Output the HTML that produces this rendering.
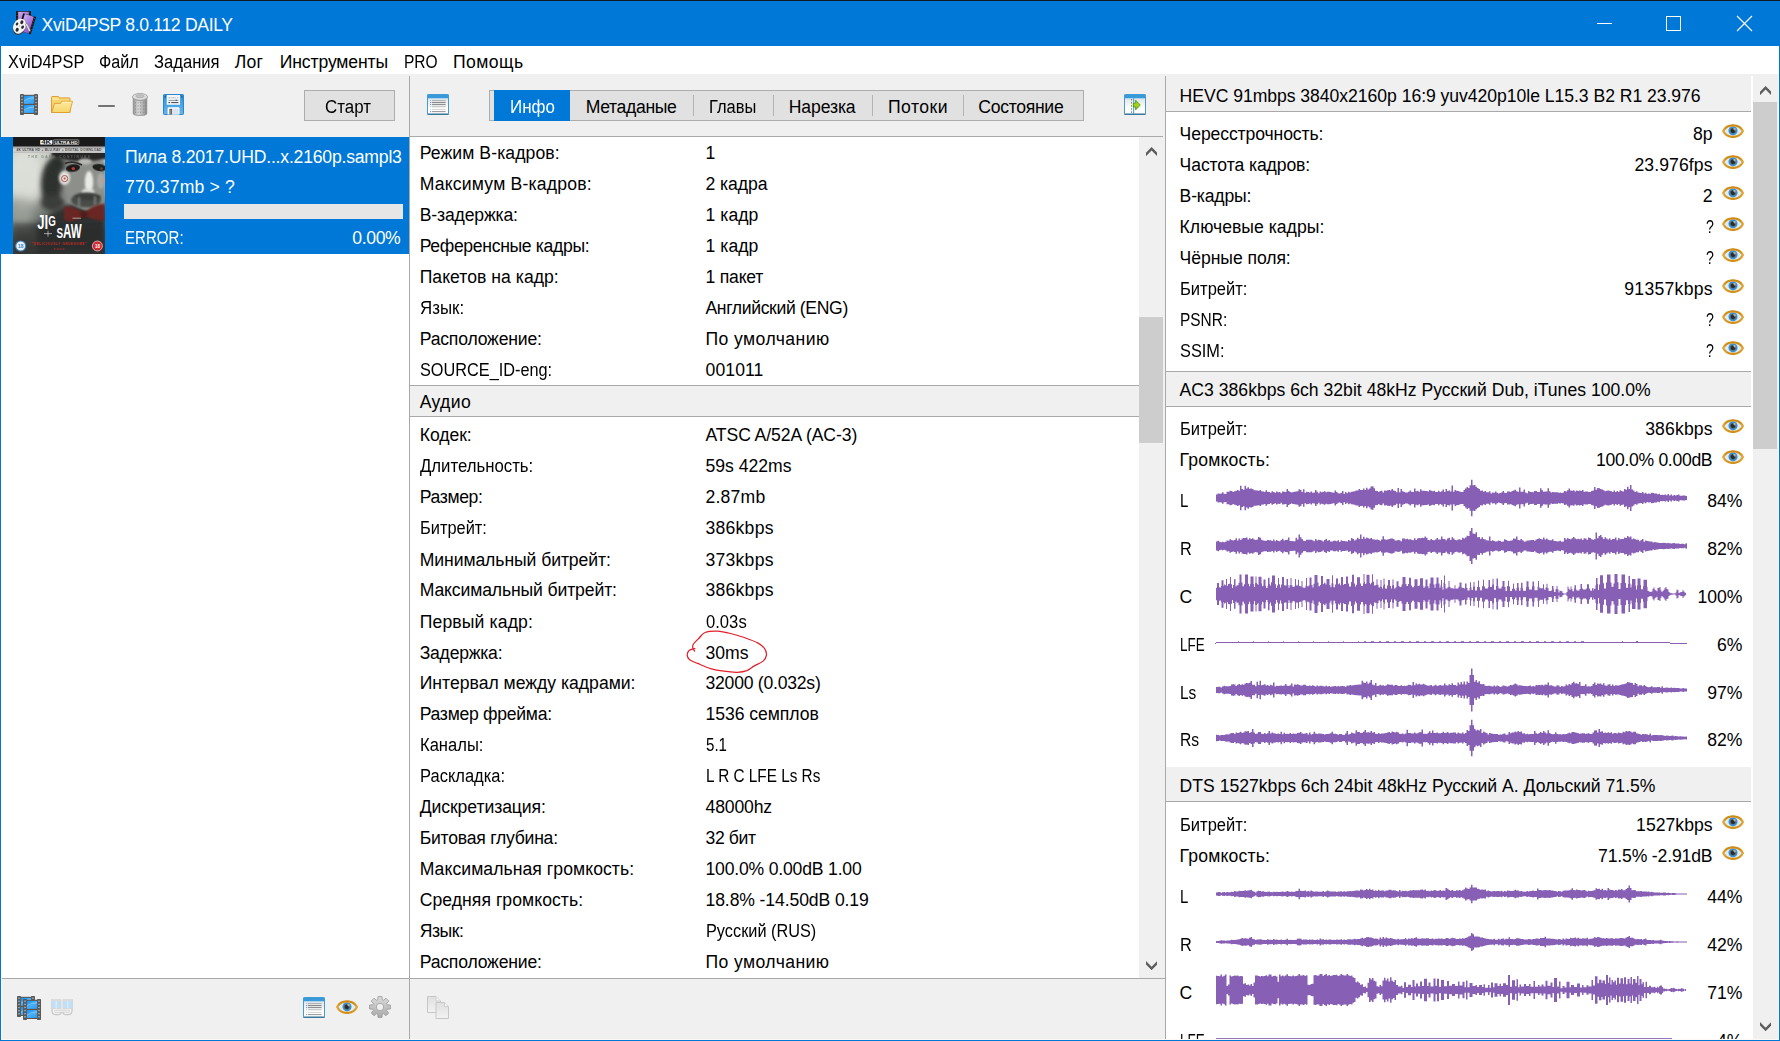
<!DOCTYPE html>
<html lang="ru"><head><meta charset="utf-8"><title>XviD4PSP 8.0.112 DAILY</title>
<style>
html,body{margin:0;padding:0;background:#fff;}
body{width:1780px;height:1041px;overflow:hidden;font-family:"Liberation Sans",sans-serif;}
#win{position:relative;width:1780px;height:1041px;overflow:hidden;background:#fff;}
#win>div,#win>svg,#win>span{position:absolute;}
.t{white-space:pre;transform-origin:0 50%;font-size:17.6px;line-height:20px;color:#000;}
</style></head>
<body>
<div id="win">
<div style="left:0px;top:0px;width:1780px;height:1041px;background:#0078d7;"></div>
<div style="left:0px;top:0px;width:1780px;height:1px;background:#101a24;"></div>
<div style="left:1px;top:46px;width:1778px;height:994px;background:#fbf8f5;"></div>
<div style="left:1px;top:46px;width:1778px;height:28px;background:#fff;"></div>
<div style="left:2px;top:74px;width:1776px;height:965px;background:#f0f0f0;"></div>
<div style="left:1px;top:137px;width:408px;height:841px;background:#fff;"></div>
<div style="left:2px;top:978px;width:407px;height:1px;background:#a9a9a9;"></div>
<div style="left:409px;top:76px;width:1px;height:963px;background:#a9a9a9;"></div>
<div style="left:1px;top:137px;width:408px;height:117px;background:#0078d7;"></div>
<div style="left:304px;top:90px;width:91px;height:31px;background:#e1e1e1;box-sizing:border-box;border:1px solid #adadad;"></div>
<div style="left:410px;top:136px;width:753px;height:1px;background:#a9a9a9;"></div>
<div style="left:410px;top:137px;width:729px;height:841px;background:#fff;"></div>
<div style="left:410px;top:978px;width:755px;height:1px;background:#a9a9a9;"></div>
<div style="left:1139px;top:137px;width:26px;height:841px;background:#f0f0f0;"></div>
<div style="left:1139px;top:317px;width:24px;height:126px;background:#cdcdcd;"></div>
<div style="left:1165px;top:76px;width:1px;height:963px;background:#a9a9a9;"></div>
<div style="left:1166px;top:74px;width:585px;height:965px;background:#fff;"></div>
<div style="left:1751px;top:76px;width:2px;height:963px;background:#fff;"></div>
<div style="left:1753px;top:74px;width:25px;height:965px;background:#f0f0f0;"></div>
<div style="left:1753px;top:102px;width:24px;height:347px;background:#cdcdcd;"></div>
<div style="left:489px;top:90px;width:595px;height:31px;background:#e1e1e1;box-sizing:border-box;border:1px solid #adadad;"></div>
<div style="left:494px;top:90px;width:76px;height:31px;background:#0078d7;"></div>
<div style="left:693px;top:95px;width:1px;height:21px;background:#b4b4b4;"></div>
<div style="left:773px;top:95px;width:1px;height:21px;background:#b4b4b4;"></div>
<div style="left:872px;top:95px;width:1px;height:21px;background:#b4b4b4;"></div>
<div style="left:963px;top:95px;width:1px;height:21px;background:#b4b4b4;"></div>
<div style="left:410px;top:385px;width:729px;height:1px;background:#a9a9a9;"></div>
<div style="left:410px;top:386px;width:729px;height:30px;background:#f0f0f0;"></div>
<div style="left:410px;top:416px;width:729px;height:1px;background:#a9a9a9;"></div>
<div style="left:1166px;top:74px;width:585px;height:2px;background:#f0f0f0;"></div>
<div style="left:1166px;top:76px;width:585px;height:35px;background:#f0f0f0;"></div>
<div style="left:1166px;top:111px;width:585px;height:1px;background:#a9a9a9;"></div>
<div style="left:1166px;top:371px;width:585px;height:1px;background:#a9a9a9;"></div>
<div style="left:1166px;top:372px;width:585px;height:34px;background:#f0f0f0;"></div>
<div style="left:1166px;top:406px;width:585px;height:1px;background:#a9a9a9;"></div>
<div style="left:1166px;top:767px;width:585px;height:34px;background:#f0f0f0;"></div>
<div style="left:1166px;top:801px;width:585px;height:1px;background:#a9a9a9;"></div>
<div style="left:1215.5px;top:642px;width:454px;height:1px;background:#875fb4;"></div>
<div style="left:1669.5px;top:643px;width:17px;height:1px;background:#875fb4;"></div>
<div style="left:1215px;top:642.5px;width:1px;height:1px;background:#875fb4;"></div>
<div style="left:1237.5px;top:641px;width:1px;height:1px;background:#875fb4;opacity:.75;"></div>
<div style="left:1252.5px;top:641px;width:1px;height:1px;background:#875fb4;opacity:.75;"></div>
<div style="left:1267.5px;top:641px;width:1px;height:1px;background:#875fb4;opacity:.75;"></div>
<div style="left:1282.5px;top:641px;width:1px;height:1px;background:#875fb4;opacity:.75;"></div>
<div style="left:1297.5px;top:641px;width:1px;height:1px;background:#875fb4;opacity:.75;"></div>
<div style="left:1312.5px;top:641px;width:1px;height:1px;background:#875fb4;opacity:.75;"></div>
<div style="left:1327.5px;top:641px;width:1px;height:1px;background:#875fb4;opacity:.75;"></div>
<div style="left:1342.5px;top:641px;width:1px;height:1px;background:#875fb4;opacity:.75;"></div>
<div style="left:1357.5px;top:641px;width:1px;height:1px;background:#875fb4;opacity:.75;"></div>
<div style="left:1363.5px;top:641px;width:2.5px;height:1px;background:#875fb4;opacity:.8;"></div>
<div style="left:1371px;top:641px;width:2.5px;height:1px;background:#875fb4;opacity:.8;"></div>
<div style="left:1378.5px;top:641px;width:2.5px;height:1px;background:#875fb4;opacity:.8;"></div>
<div style="left:1386px;top:641px;width:2.5px;height:1px;background:#875fb4;opacity:.8;"></div>
<div style="left:1393.5px;top:641px;width:2.5px;height:1px;background:#875fb4;opacity:.8;"></div>
<div style="left:1401px;top:641px;width:2.5px;height:1px;background:#875fb4;opacity:.8;"></div>
<div style="left:1408.5px;top:641px;width:2.5px;height:1px;background:#875fb4;opacity:.8;"></div>
<div style="left:1416px;top:641px;width:2.5px;height:1px;background:#875fb4;opacity:.8;"></div>
<div style="left:1423.5px;top:641px;width:2.5px;height:1px;background:#875fb4;opacity:.8;"></div>
<div style="left:1431px;top:641px;width:2.5px;height:1px;background:#875fb4;opacity:.8;"></div>
<div style="left:1438.5px;top:641px;width:2.5px;height:1px;background:#875fb4;opacity:.8;"></div>
<div style="left:1446px;top:641px;width:2.5px;height:1px;background:#875fb4;opacity:.8;"></div>
<div style="left:1453.5px;top:641px;width:2.5px;height:1px;background:#875fb4;opacity:.8;"></div>
<div style="left:1461px;top:641px;width:2.5px;height:1px;background:#875fb4;opacity:.8;"></div>
<div style="left:1468.5px;top:641px;width:2.5px;height:1px;background:#875fb4;opacity:.8;"></div>
<div style="left:1476px;top:641px;width:2.5px;height:1px;background:#875fb4;opacity:.8;"></div>
<div style="left:1483.5px;top:641px;width:2.5px;height:1px;background:#875fb4;opacity:.8;"></div>
<div style="left:1491px;top:641px;width:2.5px;height:1px;background:#875fb4;opacity:.8;"></div>
<div style="left:1498.5px;top:641px;width:2.5px;height:1px;background:#875fb4;opacity:.8;"></div>
<div style="left:1506px;top:641px;width:2.5px;height:1px;background:#875fb4;opacity:.8;"></div>
<div style="left:1513.5px;top:641px;width:2.5px;height:1px;background:#875fb4;opacity:.8;"></div>
<div style="left:1521px;top:641px;width:2.5px;height:1px;background:#875fb4;opacity:.8;"></div>
<div style="left:1528.5px;top:641px;width:2.5px;height:1px;background:#875fb4;opacity:.8;"></div>
<div style="left:1536px;top:641px;width:2.5px;height:1px;background:#875fb4;opacity:.8;"></div>
<div style="left:1543.5px;top:641px;width:2.5px;height:1px;background:#875fb4;opacity:.8;"></div>
<div style="left:1551px;top:641px;width:2.5px;height:1px;background:#875fb4;opacity:.8;"></div>
<div style="left:1558.5px;top:641px;width:2.5px;height:1px;background:#875fb4;opacity:.8;"></div>
<div style="left:1566px;top:641px;width:2.5px;height:1px;background:#875fb4;opacity:.8;"></div>
<div style="left:1573.5px;top:641px;width:2.5px;height:1px;background:#875fb4;opacity:.8;"></div>
<div style="left:1581px;top:641px;width:2.5px;height:1px;background:#875fb4;opacity:.8;"></div>
<div style="left:1621.5px;top:641px;width:1px;height:1px;background:#875fb4;"></div>
<div style="left:1635.5px;top:641px;width:2px;height:1px;background:#875fb4;"></div>
<div style="left:1215.5px;top:1038px;width:456px;height:1px;background:#875fb4;opacity:.85;"></div>
<div style="left:97.5px;top:104.5px;width:17.5px;height:2.3px;background:#737373;border-radius:1px;"></div>
<div style="left:124px;top:204px;width:279px;height:15px;background:#e6e6e6;"></div>
<svg style="left:1590px;top:8px" width="180" height="32" viewBox="0 0 180 32"><g stroke="#fff" stroke-width="1" fill="none" shape-rendering="crispEdges"><path d="M7 15.5H22"/><rect x="76.5" y="8.5" width="14" height="14"/></g><path d="M147 8L162 23M162 8L147 23" stroke="#fff" stroke-width="1.1" fill="none"/></svg>
<svg width="0" height="0" style="left:0;top:0"><defs>
<linearGradient id="lid" x1="0" y1="0" x2="0" y2="1"><stop offset="0" stop-color="#cf8a12"/><stop offset=".5" stop-color="#e8a531"/><stop offset="1" stop-color="#d38f17"/></linearGradient>
<radialGradient id="iris" cx=".5" cy=".5" r=".5"><stop offset="0" stop-color="#2f6fa8"/><stop offset=".6" stop-color="#3b86c6"/><stop offset="1" stop-color="#4a97d8"/></radialGradient>
<symbol id="eye" viewBox="0 0 22 14">
<path d="M.8 7.1C4.6-.6 17.4-.6 21.3 7.1 17.4 14.9 4.6 14.9.8 7.1Z" fill="#dbeffb"/>
<circle cx="11" cy="6.8" r="4.6" fill="url(#iris)"/>
<circle cx="11" cy="6.8" r="2.7" fill="#2b2b2b" stroke="#86a88f" stroke-width=".35"/>
<path d="M11.3 4.3h2.2v2.3h-1.1v-1.2h-1.1z" fill="#c9c9c9"/>
<path d="M1.2 7.1C5-.6 17-.6 20.9 7.1 17 14.9 5 14.9 1.2 7.1Z" fill="none" stroke="url(#lid)" stroke-width="2.2" stroke-linejoin="round"/>
<path d="M3 4.6C7 .2 15 .2 19 4.6" fill="none" stroke="#cf8d16" stroke-width="1.1"/>
</symbol></defs></svg>
<span class="t" style="right:67.4px;top:124px">8p</span>
<svg style="left:1721.8px;top:124px" width="22" height="14"><use href="#eye"/></svg>
<svg style="left:1721.8px;top:155px" width="22" height="14"><use href="#eye"/></svg>
<span class="t" style="right:67.4px;top:186px">2</span>
<svg style="left:1721.8px;top:186px" width="22" height="14"><use href="#eye"/></svg>
<svg style="left:1721.8px;top:217px" width="22" height="14"><use href="#eye"/></svg>
<svg style="left:1721.8px;top:248px" width="22" height="14"><use href="#eye"/></svg>
<svg style="left:1721.8px;top:279px" width="22" height="14"><use href="#eye"/></svg>
<svg style="left:1721.8px;top:310px" width="22" height="14"><use href="#eye"/></svg>
<svg style="left:1721.8px;top:341px" width="22" height="14"><use href="#eye"/></svg>
<svg style="left:1721.8px;top:419px" width="22" height="14"><use href="#eye"/></svg>
<svg style="left:1721.8px;top:450px" width="22" height="14"><use href="#eye"/></svg>
<span class="t" style="right:37.6px;top:491px">84%</span>
<span class="t" style="right:37.6px;top:539px">82%</span>
<span class="t" style="right:37.6px;top:587px">100%</span>
<span class="t" style="right:37.6px;top:635px">6%</span>
<span class="t" style="right:37.6px;top:683px">97%</span>
<span class="t" style="right:37.6px;top:730px">82%</span>
<svg style="left:1721.8px;top:815px" width="22" height="14"><use href="#eye"/></svg>
<svg style="left:1721.8px;top:846px" width="22" height="14"><use href="#eye"/></svg>
<span class="t" style="right:37.6px;top:887px">44%</span>
<span class="t" style="right:37.6px;top:935px">42%</span>
<span class="t" style="right:37.6px;top:983px">71%</span>
<span class="t" style="right:37.6px;top:1031px">4%</span>
<svg style="left:1215.5px;top:474.4px" width="474" height="48" viewBox="0 -24 474 48"><path fill="#875fb4" d="M0 -3.5V-3.5h1.5V-4.5h1.5V-4.2h1.5V-4.5h1.5V-5.8h1.5V-4.3h1.5V-3.9h1.5V-6.2h1.5V-6.2h1.5V-7.2h1.5V-7.1h1.5V-6.0h1.5V-6.8h1.5V-7.3h1.5V-8.1h1.5V-7.3h1.5V-12.2h1.5V-9.0h1.5V-8.2h1.5V-12.3h1.5V-9.4h1.5V-10.8h1.5V-9.3h1.5V-9.6h1.5V-8.9h1.5V-7.8h1.5V-7.7h1.5V-7.4h1.5V-7.2h1.5V-8.1h1.5V-6.7h1.5V-6.5h1.5V-6.0h1.5V-7.7h1.5V-6.3h1.5V-6.0h1.5V-5.2h1.5V-6.8h1.5V-5.9h1.5V-5.2h1.5V-6.6h1.5V-5.7h1.5V-5.9h1.5V-4.8h1.5V-6.4h1.5V-6.3h1.5V-5.9h1.5V-8.9h1.5V-6.9h1.5V-5.9h1.5V-5.6h1.5V-6.0h1.5V-6.2h1.5V-6.5h1.5V-6.7h1.5V-8.8h1.5V-8.0h1.5V-6.1h1.5V-8.8h1.5V-5.2h1.5V-6.3h1.5V-6.0h1.5V-5.6h1.5V-6.6h1.5V-5.2h1.5V-5.5h1.5V-7.9h1.5V-6.2h1.5V-4.8h1.5V-6.4h1.5V-5.7h1.5V-6.2h1.5V-6.7h1.5V-5.8h1.5V-6.3h1.5V-6.2h1.5V-6.1h1.5V-5.5h1.5V-5.3h1.5V-7.4h1.5V-5.9h1.5V-4.7h1.5V-4.6h1.5V-5.3h1.5V-7.1h1.5V-4.3h1.5V-6.0h1.5V-4.8h1.5V-6.3h1.5V-5.6h1.5V-6.3h1.5V-6.5h1.5V-6.8h1.5V-7.4h1.5V-7.5h1.5V-8.9h1.5V-7.9h1.5V-8.0h1.5V-9.5h1.5V-8.1h1.5V-10.2h1.5V-8.5h1.5V-9.4h1.5V-11.6h1.5V-11.8h1.5V-9.7h1.5V-7.3h1.5V-7.0h1.5V-6.0h1.5V-7.1h1.5V-7.3h1.5V-5.6h1.5V-7.4h1.5V-7.3h1.5V-7.8h1.5V-8.1h1.5V-7.4h1.5V-9.0h1.5V-7.5h1.5V-7.1h1.5V-5.7h1.5V-10.0h1.5V-5.8h1.5V-8.9h1.5V-6.8h1.5V-6.0h1.5V-5.6h1.5V-5.4h1.5V-6.2h1.5V-7.5h1.5V-6.2h1.5V-5.9h1.5V-9.4h1.5V-6.7h1.5V-7.2h1.5V-6.3h1.5V-8.7h1.5V-7.3h1.5V-7.3h1.5V-6.9h1.5V-6.9h1.5V-6.4h1.5V-8.0h1.5V-7.3h1.5V-6.7h1.5V-7.3h1.5V-6.0h1.5V-6.0h1.5V-7.3h1.5V-6.1h1.5V-6.7h1.5V-8.4h1.5V-5.9h1.5V-9.1h1.5V-6.9h1.5V-7.5h1.5V-6.5h1.5V-12.6h1.5V-6.3h1.5V-8.1h1.5V-7.3h1.5V-6.9h1.5V-6.4h1.5V-6.1h1.5V-5.9h1.5V-8.0h1.5V-9.4h1.5V-11.0h1.5V-10.1h1.5V-12.8h1.5V-18.3h1.5V-12.8h1.5V-13.0h1.5V-11.2h1.5V-10.1h1.5V-8.9h1.5V-7.2h1.5V-7.6h1.5V-6.2h1.5V-6.9h1.5V-5.8h1.5V-5.7h1.5V-6.8h1.5V-4.6h1.5V-5.5h1.5V-5.3h1.5V-6.5h1.5V-5.2h1.5V-4.6h1.5V-5.1h1.5V-5.6h1.5V-7.1h1.5V-5.3h1.5V-4.9h1.5V-6.5h1.5V-6.4h1.5V-5.9h1.5V-6.9h1.5V-7.6h1.5V-8.3h1.5V-6.7h1.5V-6.3h1.5V-10.4h1.5V-6.2h1.5V-6.3h1.5V-8.6h1.5V-5.5h1.5V-4.7h1.5V-7.0h1.5V-6.0h1.5V-5.9h1.5V-5.7h1.5V-6.9h1.5V-6.9h1.5V-5.9h1.5V-6.1h1.5V-9.7h1.5V-7.7h1.5V-6.3h1.5V-6.5h1.5V-6.6h1.5V-9.7h1.5V-6.7h1.5V-5.5h1.5V-5.9h1.5V-5.7h1.5V-5.7h1.5V-5.8h1.5V-5.2h1.5V-5.6h1.5V-5.1h1.5V-5.4h1.5V-7.1h1.5V-6.6h1.5V-7.7h1.5V-9.5h1.5V-7.4h1.5V-7.3h1.5V-7.7h1.5V-6.5h1.5V-7.4h1.5V-7.0h1.5V-7.4h1.5V-7.0h1.5V-7.9h1.5V-6.3h1.5V-6.5h1.5V-6.6h1.5V-6.1h1.5V-6.1h1.5V-7.0h1.5V-7.6h1.5V-10.9h1.5V-8.3h1.5V-10.0h1.5V-9.7h1.5V-9.1h1.5V-8.6h1.5V-7.7h1.5V-6.8h1.5V-7.2h1.5V-7.4h1.5V-7.2h1.5V-6.7h1.5V-6.0h1.5V-7.5h1.5V-6.0h1.5V-6.9h1.5V-5.9h1.5V-7.8h1.5V-7.1h1.5V-6.5h1.5V-9.1h1.5V-8.2h1.5V-11.3h1.5V-9.0h1.5V-13.1h1.5V-8.4h1.5V-7.6h1.5V-6.0h1.5V-6.8h1.5V-5.6h1.5V-5.2h1.5V-4.9h1.5V-5.9h1.5V-4.6h1.5V-5.2h1.5V-3.9h1.5V-4.6h1.5V-4.2h1.5V-5.3h1.5V-4.9h1.5V-4.6h1.5V-4.4h1.5V-3.8h1.5V-4.2h1.5V-3.0h1.5V-3.2h1.5V-3.0h1.5V-3.4h1.5V-2.7h1.5V-4.0h1.5V-2.5h1.5V-3.6h1.5V-2.3h1.5V-2.9h1.5V-2.6h1.5V-3.1h1.5V-3.6h1.5V-2.3h1.5V-2.3h1.5V-2.4h1.5V-2.4h1.5V-2.1h1.5V2.1h-1.5V2.4h-1.5V2.4h-1.5V2.3h-1.5V2.3h-1.5V3.6h-1.5V3.1h-1.5V2.6h-1.5V2.9h-1.5V2.3h-1.5V3.6h-1.5V2.5h-1.5V4.0h-1.5V2.7h-1.5V3.4h-1.5V3.0h-1.5V3.2h-1.5V3.0h-1.5V4.2h-1.5V3.8h-1.5V4.4h-1.5V4.6h-1.5V4.9h-1.5V5.3h-1.5V4.2h-1.5V4.6h-1.5V3.9h-1.5V5.2h-1.5V4.6h-1.5V5.9h-1.5V4.9h-1.5V5.2h-1.5V5.6h-1.5V6.8h-1.5V6.0h-1.5V7.6h-1.5V8.4h-1.5V13.1h-1.5V9.0h-1.5V11.3h-1.5V8.2h-1.5V9.1h-1.5V6.5h-1.5V7.1h-1.5V7.8h-1.5V5.9h-1.5V6.9h-1.5V6.0h-1.5V7.5h-1.5V6.0h-1.5V6.7h-1.5V7.2h-1.5V7.4h-1.5V7.2h-1.5V6.8h-1.5V7.7h-1.5V8.6h-1.5V9.1h-1.5V9.7h-1.5V10.0h-1.5V8.3h-1.5V10.9h-1.5V7.6h-1.5V7.0h-1.5V6.1h-1.5V6.1h-1.5V6.6h-1.5V6.5h-1.5V6.3h-1.5V7.9h-1.5V7.0h-1.5V7.4h-1.5V7.0h-1.5V7.4h-1.5V6.5h-1.5V7.7h-1.5V7.3h-1.5V7.4h-1.5V9.5h-1.5V7.7h-1.5V6.6h-1.5V7.1h-1.5V5.4h-1.5V5.1h-1.5V5.6h-1.5V5.2h-1.5V5.8h-1.5V5.7h-1.5V5.7h-1.5V5.9h-1.5V5.5h-1.5V6.7h-1.5V9.7h-1.5V6.6h-1.5V6.5h-1.5V6.3h-1.5V7.7h-1.5V9.7h-1.5V6.1h-1.5V5.9h-1.5V6.9h-1.5V6.9h-1.5V5.7h-1.5V5.9h-1.5V6.0h-1.5V7.0h-1.5V4.7h-1.5V5.5h-1.5V8.6h-1.5V6.3h-1.5V6.2h-1.5V10.4h-1.5V6.3h-1.5V6.7h-1.5V8.3h-1.5V7.6h-1.5V6.9h-1.5V5.9h-1.5V6.4h-1.5V6.5h-1.5V4.9h-1.5V5.3h-1.5V7.1h-1.5V5.6h-1.5V5.1h-1.5V4.6h-1.5V5.2h-1.5V6.5h-1.5V5.3h-1.5V5.5h-1.5V4.6h-1.5V6.8h-1.5V5.7h-1.5V5.8h-1.5V6.9h-1.5V6.2h-1.5V7.6h-1.5V7.2h-1.5V8.9h-1.5V10.1h-1.5V11.2h-1.5V13.0h-1.5V12.8h-1.5V18.3h-1.5V12.8h-1.5V10.1h-1.5V11.0h-1.5V9.4h-1.5V8.0h-1.5V5.9h-1.5V6.1h-1.5V6.4h-1.5V6.9h-1.5V7.3h-1.5V8.1h-1.5V6.3h-1.5V12.6h-1.5V6.5h-1.5V7.5h-1.5V6.9h-1.5V9.1h-1.5V5.9h-1.5V8.4h-1.5V6.7h-1.5V6.1h-1.5V7.3h-1.5V6.0h-1.5V6.0h-1.5V7.3h-1.5V6.7h-1.5V7.3h-1.5V8.0h-1.5V6.4h-1.5V6.9h-1.5V6.9h-1.5V7.3h-1.5V7.3h-1.5V8.7h-1.5V6.3h-1.5V7.2h-1.5V6.7h-1.5V9.4h-1.5V5.9h-1.5V6.2h-1.5V7.5h-1.5V6.2h-1.5V5.4h-1.5V5.6h-1.5V6.0h-1.5V6.8h-1.5V8.9h-1.5V5.8h-1.5V10.0h-1.5V5.7h-1.5V7.1h-1.5V7.5h-1.5V9.0h-1.5V7.4h-1.5V8.1h-1.5V7.8h-1.5V7.3h-1.5V7.4h-1.5V5.6h-1.5V7.3h-1.5V7.1h-1.5V6.0h-1.5V7.0h-1.5V7.3h-1.5V9.7h-1.5V11.8h-1.5V11.6h-1.5V9.4h-1.5V8.5h-1.5V10.2h-1.5V8.1h-1.5V9.5h-1.5V8.0h-1.5V7.9h-1.5V8.9h-1.5V7.5h-1.5V7.4h-1.5V6.8h-1.5V6.5h-1.5V6.3h-1.5V5.6h-1.5V6.3h-1.5V4.8h-1.5V6.0h-1.5V4.3h-1.5V7.1h-1.5V5.3h-1.5V4.6h-1.5V4.7h-1.5V5.9h-1.5V7.4h-1.5V5.3h-1.5V5.5h-1.5V6.1h-1.5V6.2h-1.5V6.3h-1.5V5.8h-1.5V6.7h-1.5V6.2h-1.5V5.7h-1.5V6.4h-1.5V4.8h-1.5V6.2h-1.5V7.9h-1.5V5.5h-1.5V5.2h-1.5V6.6h-1.5V5.6h-1.5V6.0h-1.5V6.3h-1.5V5.2h-1.5V8.8h-1.5V6.1h-1.5V8.0h-1.5V8.8h-1.5V6.7h-1.5V6.5h-1.5V6.2h-1.5V6.0h-1.5V5.6h-1.5V5.9h-1.5V6.9h-1.5V8.9h-1.5V5.9h-1.5V6.3h-1.5V6.4h-1.5V4.8h-1.5V5.9h-1.5V5.7h-1.5V6.6h-1.5V5.2h-1.5V5.9h-1.5V6.8h-1.5V5.2h-1.5V6.0h-1.5V6.3h-1.5V7.7h-1.5V6.0h-1.5V6.5h-1.5V6.7h-1.5V8.1h-1.5V7.2h-1.5V7.4h-1.5V7.7h-1.5V7.8h-1.5V8.9h-1.5V9.6h-1.5V9.3h-1.5V10.8h-1.5V9.4h-1.5V12.3h-1.5V8.2h-1.5V9.0h-1.5V12.2h-1.5V7.3h-1.5V8.1h-1.5V7.3h-1.5V6.8h-1.5V6.0h-1.5V7.1h-1.5V7.2h-1.5V6.2h-1.5V6.2h-1.5V3.9h-1.5V4.3h-1.5V5.8h-1.5V4.5h-1.5V4.2h-1.5V4.5h-1.5V3.5h-1.5Z"/></svg>
<svg style="left:1215.5px;top:522.3px" width="474" height="48" viewBox="0 -24 474 48"><path fill="#875fb4" d="M0 -4.4V-4.4h1.5V-5.2h1.5V-4.3h1.5V-3.8h1.5V-4.3h1.5V-3.8h1.5V-4.3h1.5V-5.6h1.5V-5.3h1.5V-6.7h1.5V-5.9h1.5V-5.5h1.5V-6.0h1.5V-7.8h1.5V-5.6h1.5V-7.6h1.5V-5.9h1.5V-7.5h1.5V-7.9h1.5V-7.9h1.5V-8.6h1.5V-6.6h1.5V-7.7h1.5V-7.0h1.5V-7.7h1.5V-6.6h1.5V-5.9h1.5V-6.4h1.5V-8.9h1.5V-8.3h1.5V-6.3h1.5V-5.5h1.5V-5.3h1.5V-5.3h1.5V-6.0h1.5V-5.7h1.5V-5.8h1.5V-5.0h1.5V-6.4h1.5V-4.7h1.5V-5.9h1.5V-4.9h1.5V-4.7h1.5V-5.9h1.5V-7.2h1.5V-5.6h1.5V-5.9h1.5V-6.3h1.5V-8.5h1.5V-5.0h1.5V-4.9h1.5V-4.8h1.5V-4.8h1.5V-8.2h1.5V-6.5h1.5V-11.6h1.5V-8.7h1.5V-6.7h1.5V-5.3h1.5V-5.0h1.5V-6.3h1.5V-6.3h1.5V-6.2h1.5V-6.2h1.5V-5.7h1.5V-4.7h1.5V-7.0h1.5V-5.5h1.5V-6.2h1.5V-6.1h1.5V-5.5h1.5V-4.4h1.5V-6.0h1.5V-6.9h1.5V-5.2h1.5V-5.9h1.5V-4.6h1.5V-4.6h1.5V-5.2h1.5V-5.3h1.5V-4.7h1.5V-5.7h1.5V-4.1h1.5V-5.8h1.5V-5.0h1.5V-4.9h1.5V-4.7h1.5V-4.6h1.5V-6.1h1.5V-5.3h1.5V-8.1h1.5V-6.9h1.5V-5.5h1.5V-6.5h1.5V-8.2h1.5V-7.1h1.5V-11.4h1.5V-7.0h1.5V-9.3h1.5V-7.2h1.5V-8.5h1.5V-7.8h1.5V-7.3h1.5V-8.0h1.5V-6.7h1.5V-6.4h1.5V-6.2h1.5V-6.5h1.5V-6.1h1.5V-5.2h1.5V-6.4h1.5V-9.8h1.5V-6.8h1.5V-6.2h1.5V-6.6h1.5V-6.9h1.5V-7.4h1.5V-7.6h1.5V-7.1h1.5V-5.4h1.5V-5.4h1.5V-6.1h1.5V-5.8h1.5V-4.8h1.5V-7.5h1.5V-7.4h1.5V-6.7h1.5V-7.3h1.5V-6.6h1.5V-6.7h1.5V-6.3h1.5V-5.7h1.5V-7.8h1.5V-5.9h1.5V-7.5h1.5V-8.1h1.5V-7.7h1.5V-8.2h1.5V-8.0h1.5V-9.5h1.5V-8.2h1.5V-6.1h1.5V-5.8h1.5V-6.9h1.5V-6.0h1.5V-5.8h1.5V-6.5h1.5V-7.9h1.5V-6.4h1.5V-6.5h1.5V-9.4h1.5V-6.9h1.5V-7.0h1.5V-5.8h1.5V-7.6h1.5V-8.2h1.5V-6.1h1.5V-8.7h1.5V-7.4h1.5V-6.0h1.5V-5.7h1.5V-6.4h1.5V-6.8h1.5V-6.0h1.5V-8.3h1.5V-7.5h1.5V-8.6h1.5V-10.3h1.5V-10.0h1.5V-14.9h1.5V-17.9h1.5V-12.6h1.5V-12.0h1.5V-13.7h1.5V-8.7h1.5V-8.9h1.5V-6.9h1.5V-8.7h1.5V-7.0h1.5V-6.4h1.5V-5.7h1.5V-5.6h1.5V-9.6h1.5V-5.0h1.5V-5.8h1.5V-5.0h1.5V-4.4h1.5V-4.8h1.5V-5.4h1.5V-5.0h1.5V-4.3h1.5V-4.5h1.5V-6.8h1.5V-5.9h1.5V-5.3h1.5V-4.9h1.5V-5.3h1.5V-5.7h1.5V-7.4h1.5V-7.2h1.5V-9.4h1.5V-6.0h1.5V-5.8h1.5V-7.1h1.5V-5.7h1.5V-4.6h1.5V-4.5h1.5V-5.6h1.5V-5.4h1.5V-5.7h1.5V-6.1h1.5V-6.0h1.5V-5.3h1.5V-6.4h1.5V-7.1h1.5V-7.7h1.5V-7.0h1.5V-6.4h1.5V-8.6h1.5V-6.5h1.5V-7.5h1.5V-6.3h1.5V-5.7h1.5V-5.7h1.5V-6.7h1.5V-5.0h1.5V-5.1h1.5V-4.5h1.5V-4.8h1.5V-5.3h1.5V-4.3h1.5V-4.6h1.5V-7.9h1.5V-6.6h1.5V-8.0h1.5V-6.9h1.5V-6.8h1.5V-7.7h1.5V-9.1h1.5V-7.4h1.5V-6.8h1.5V-7.2h1.5V-6.8h1.5V-7.5h1.5V-6.0h1.5V-7.8h1.5V-7.5h1.5V-6.3h1.5V-8.4h1.5V-8.0h1.5V-6.8h1.5V-6.2h1.5V-6.7h1.5V-13.4h1.5V-7.8h1.5V-10.1h1.5V-11.0h1.5V-8.7h1.5V-7.1h1.5V-8.7h1.5V-7.6h1.5V-6.5h1.5V-7.8h1.5V-6.0h1.5V-7.1h1.5V-6.9h1.5V-8.5h1.5V-5.7h1.5V-8.1h1.5V-6.7h1.5V-7.0h1.5V-7.1h1.5V-8.4h1.5V-8.0h1.5V-9.9h1.5V-8.7h1.5V-9.4h1.5V-6.7h1.5V-7.5h1.5V-6.7h1.5V-6.3h1.5V-6.2h1.5V-4.7h1.5V-5.9h1.5V-7.1h1.5V-4.2h1.5V-5.4h1.5V-5.1h1.5V-4.8h1.5V-4.4h1.5V-4.5h1.5V-3.6h1.5V-3.9h1.5V-3.6h1.5V-3.5h1.5V-3.0h1.5V-3.1h1.5V-2.9h1.5V-3.2h1.5V-3.1h1.5V-2.7h1.5V-3.0h1.5V-2.7h1.5V-2.5h1.5V-2.7h1.5V-2.9h1.5V-2.4h1.5V-2.5h1.5V-2.4h1.5V-2.0h1.5V-2.2h1.5V-2.2h1.5V-1.8h1.5V-2.8h1.5V2.8h-1.5V1.8h-1.5V2.2h-1.5V2.2h-1.5V2.0h-1.5V2.4h-1.5V2.5h-1.5V2.4h-1.5V2.9h-1.5V2.7h-1.5V2.5h-1.5V2.7h-1.5V3.0h-1.5V2.7h-1.5V3.1h-1.5V3.2h-1.5V2.9h-1.5V3.1h-1.5V3.0h-1.5V3.5h-1.5V3.6h-1.5V3.9h-1.5V3.6h-1.5V4.5h-1.5V4.4h-1.5V4.8h-1.5V5.1h-1.5V5.4h-1.5V4.2h-1.5V7.1h-1.5V5.9h-1.5V4.7h-1.5V6.2h-1.5V6.3h-1.5V6.7h-1.5V7.5h-1.5V6.7h-1.5V9.4h-1.5V8.7h-1.5V9.9h-1.5V8.0h-1.5V8.4h-1.5V7.1h-1.5V7.0h-1.5V6.7h-1.5V8.1h-1.5V5.7h-1.5V8.5h-1.5V6.9h-1.5V7.1h-1.5V6.0h-1.5V7.8h-1.5V6.5h-1.5V7.6h-1.5V8.7h-1.5V7.1h-1.5V8.7h-1.5V11.0h-1.5V10.1h-1.5V7.8h-1.5V13.4h-1.5V6.7h-1.5V6.2h-1.5V6.8h-1.5V8.0h-1.5V8.4h-1.5V6.3h-1.5V7.5h-1.5V7.8h-1.5V6.0h-1.5V7.5h-1.5V6.8h-1.5V7.2h-1.5V6.8h-1.5V7.4h-1.5V9.1h-1.5V7.7h-1.5V6.8h-1.5V6.9h-1.5V8.0h-1.5V6.6h-1.5V7.9h-1.5V4.6h-1.5V4.3h-1.5V5.3h-1.5V4.8h-1.5V4.5h-1.5V5.1h-1.5V5.0h-1.5V6.7h-1.5V5.7h-1.5V5.7h-1.5V6.3h-1.5V7.5h-1.5V6.5h-1.5V8.6h-1.5V6.4h-1.5V7.0h-1.5V7.7h-1.5V7.1h-1.5V6.4h-1.5V5.3h-1.5V6.0h-1.5V6.1h-1.5V5.7h-1.5V5.4h-1.5V5.6h-1.5V4.5h-1.5V4.6h-1.5V5.7h-1.5V7.1h-1.5V5.8h-1.5V6.0h-1.5V9.4h-1.5V7.2h-1.5V7.4h-1.5V5.7h-1.5V5.3h-1.5V4.9h-1.5V5.3h-1.5V5.9h-1.5V6.8h-1.5V4.5h-1.5V4.3h-1.5V5.0h-1.5V5.4h-1.5V4.8h-1.5V4.4h-1.5V5.0h-1.5V5.8h-1.5V5.0h-1.5V9.6h-1.5V5.6h-1.5V5.7h-1.5V6.4h-1.5V7.0h-1.5V8.7h-1.5V6.9h-1.5V8.9h-1.5V8.7h-1.5V13.7h-1.5V12.0h-1.5V12.6h-1.5V17.9h-1.5V14.9h-1.5V10.0h-1.5V10.3h-1.5V8.6h-1.5V7.5h-1.5V8.3h-1.5V6.0h-1.5V6.8h-1.5V6.4h-1.5V5.7h-1.5V6.0h-1.5V7.4h-1.5V8.7h-1.5V6.1h-1.5V8.2h-1.5V7.6h-1.5V5.8h-1.5V7.0h-1.5V6.9h-1.5V9.4h-1.5V6.5h-1.5V6.4h-1.5V7.9h-1.5V6.5h-1.5V5.8h-1.5V6.0h-1.5V6.9h-1.5V5.8h-1.5V6.1h-1.5V8.2h-1.5V9.5h-1.5V8.0h-1.5V8.2h-1.5V7.7h-1.5V8.1h-1.5V7.5h-1.5V5.9h-1.5V7.8h-1.5V5.7h-1.5V6.3h-1.5V6.7h-1.5V6.6h-1.5V7.3h-1.5V6.7h-1.5V7.4h-1.5V7.5h-1.5V4.8h-1.5V5.8h-1.5V6.1h-1.5V5.4h-1.5V5.4h-1.5V7.1h-1.5V7.6h-1.5V7.4h-1.5V6.9h-1.5V6.6h-1.5V6.2h-1.5V6.8h-1.5V9.8h-1.5V6.4h-1.5V5.2h-1.5V6.1h-1.5V6.5h-1.5V6.2h-1.5V6.4h-1.5V6.7h-1.5V8.0h-1.5V7.3h-1.5V7.8h-1.5V8.5h-1.5V7.2h-1.5V9.3h-1.5V7.0h-1.5V11.4h-1.5V7.1h-1.5V8.2h-1.5V6.5h-1.5V5.5h-1.5V6.9h-1.5V8.1h-1.5V5.3h-1.5V6.1h-1.5V4.6h-1.5V4.7h-1.5V4.9h-1.5V5.0h-1.5V5.8h-1.5V4.1h-1.5V5.7h-1.5V4.7h-1.5V5.3h-1.5V5.2h-1.5V4.6h-1.5V4.6h-1.5V5.9h-1.5V5.2h-1.5V6.9h-1.5V6.0h-1.5V4.4h-1.5V5.5h-1.5V6.1h-1.5V6.2h-1.5V5.5h-1.5V7.0h-1.5V4.7h-1.5V5.7h-1.5V6.2h-1.5V6.2h-1.5V6.3h-1.5V6.3h-1.5V5.0h-1.5V5.3h-1.5V6.7h-1.5V8.7h-1.5V11.6h-1.5V6.5h-1.5V8.2h-1.5V4.8h-1.5V4.8h-1.5V4.9h-1.5V5.0h-1.5V8.5h-1.5V6.3h-1.5V5.9h-1.5V5.6h-1.5V7.2h-1.5V5.9h-1.5V4.7h-1.5V4.9h-1.5V5.9h-1.5V4.7h-1.5V6.4h-1.5V5.0h-1.5V5.8h-1.5V5.7h-1.5V6.0h-1.5V5.3h-1.5V5.3h-1.5V5.5h-1.5V6.3h-1.5V8.3h-1.5V8.9h-1.5V6.4h-1.5V5.9h-1.5V6.6h-1.5V7.7h-1.5V7.0h-1.5V7.7h-1.5V6.6h-1.5V8.6h-1.5V7.9h-1.5V7.9h-1.5V7.5h-1.5V5.9h-1.5V7.6h-1.5V5.6h-1.5V7.8h-1.5V6.0h-1.5V5.5h-1.5V5.9h-1.5V6.7h-1.5V5.3h-1.5V5.6h-1.5V4.3h-1.5V3.8h-1.5V4.3h-1.5V3.8h-1.5V4.3h-1.5V5.2h-1.5V4.4h-1.5Z"/></svg>
<svg style="left:1215.5px;top:570.2px" width="474" height="48" viewBox="0 -24 474 48"><path fill="#875fb4" d="M0 -6.3V-6.3h1V-10.9h2V-6.7h1V-6.4h1V-8.2h0.5V-13.8h2V-8.0h0.5V-9.4h1V-8.8h1V-14.9h1V-8.3h1V-10.0h1V-10.3h1V-16.9h1V-9.7h1V-6.0h1V-9.0h1V-14.7h1.5V-7.4h1V-8.7h2V-11.3h1V-19.6h2V-11.4h1V-7.7h1.5V-9.8h1V-19.4h3V-10.2h1V-7.7h1V-10.0h0.5V-17.6h3V-10.1h0.5V-6.9h1V-10.8h0.5V-17.6h1V-11.1h0.5V-9.8h1V-9.0h0.5V-17.3h3V-10.6h0.5V-7.7h1V-8.3h0.5V-14.5h2V-8.3h0.5V-6.0h1.5V-8.3h0.5V-16.3h1.5V-10.0h0.5V-8.6h1V-11.8h1V-18.5h3V-9.8h1V-6.1h1V-8.6h1V-15.9h1V-9.7h1V-6.6h1V-9.6h1V-17.0h2V-8.7h1V-8.5h1V-8.5h0.5V-15.0h1.5V-9.1h0.5V-6.3h1V-8.8h1V-15.9h1V-8.8h1V-7.1h2V-8.0h0.5V-14.9h1V-8.2h0.5V-9.2h1V-8.3h0.5V-14.2h1V-8.1h0.5V-7.9h1V-7.4h1V-13.0h1V-6.6h1V-6.3h2V-8.6h0.5V-16.1h1V-8.1h0.5V-7.5h1V-8.6h1V-16.4h2V-9.0h1V-6.6h1V-10.2h1V-19.0h3V-11.6h1V-7.7h1.5V-9.1h1V-18.1h2V-9.9h1V-11.3h1.5V-9.6h1V-15.1h3V-8.8h1V-6.7h1V-10.7h0.5V-18.7h1V-10.6h0.5V-6.8h1.5V-9.5h1V-15.5h2V-9.8h1V-10.8h1V-8.7h1V-17.0h2V-9.2h1V-10.1h1V-10.0h1V-17.4h2V-10.6h1V-7.4h2V-12.1h1V-19.2h2V-10.6h1V-7.5h1V-9.2h1V-16.8h3V-10.4h1V-7.9h2V-10.4h0.5V-19.9h1V-12.1h0.5V-9.9h1V-10.4h0.5V-19.2h3V-11.2h0.5V-9.7h1V-11.2h1V-19.8h1V-12.3h1V-8.6h1.5V-9.0h1V-14.8h1V-9.3h1V-6.6h1.5V-7.4h0.5V-13.9h1V-7.0h0.5V-5.6h1V-8.2h0.5V-15.4h1V-9.8h0.5V-5.6h2V-8.6h1V-14.1h2V-8.1h1V-5.4h1V-8.5h0.5V-14.5h1V-9.0h0.5V-5.4h1.5V-6.8h1V-12.8h2V-7.9h1V-6.9h2V-9.5h1V-17.1h3V-10.1h1V-7.9h1.5V-10.0h1V-16.3h2V-8.6h1V-6.8h2V-8.0h0.5V-14.7h3V-7.7h0.5V-8.0h1.5V-9.2h0.5V-15.7h3V-8.3h0.5V-6.1h1V-7.4h1V-14.5h2V-7.7h1V-5.7h1V-10.4h1V-16.5h3V-9.5h1V-6.2h1V-10.3h1V-16.6h2V-10.6h1V-6.3h1V-8.7h0.5V-13.9h1V-7.0h0.5V-4.3h1V-11.3h0.5V-18.6h1V-10.0h0.5V-5.4h2V-6.8h1V-13.1h1V-7.3h1V-5.8h3V-5.3h1V-8.7h1V-5.2h1V-5.6h2V-7.3h1V-11.5h2V-6.5h1V-5.9h1.5V-5.4h1V-10.6h1.5V-5.9h1V-3.4h2V-6.1h0.5V-11.7h1V-6.7h0.5V-3.9h1.5V-7.6h0.5V-11.9h1V-7.3h0.5V-3.5h2V-7.1h1V-13.6h1V-6.8h1V-3.8h2V-7.7h1V-14.2h1V-7.6h1V-5.5h3V-7.1h0.5V-14.0h1.5V-7.1h0.5V-7.0h1.5V-9.2h0.5V-15.3h1V-9.4h0.5V-4.3h2V-8.1h0.5V-15.5h1.5V-7.8h0.5V-5.6h3V-7.5h1V-13.1h2V-6.9h1V-3.0h1.5V-8.1h1V-13.2h1V-7.4h1V-3.1h2V-5.3h1V-10.3h1V-5.2h1V-3.5h1.5V-6.0h0.5V-11.0h1.5V-6.4h0.5V-3.3h1.5V-6.3h0.5V-11.3h1.5V-5.8h0.5V-3.3h3V-7.0h0.5V-12.8h2V-7.0h0.5V-4.4h3V-7.8h0.5V-12.4h1.5V-7.8h0.5V-3.8h3V-7.3h0.5V-13.1h1V-7.3h0.5V-5.8h3V-5.8h0.5V-9.7h1V-5.0h0.5V-3.9h1V-6.5h1V-10.2h1V-6.1h1V-2.9h3V-4.2h0.5V-8.0h1.5V-4.5h0.5V-2.0h1.5V-4.8h1V-8.1h1V-4.8h1V-1.6h1V-3.4h1V-2.9h1V-2.8h1V-1.0h1V-0.5h1V-0.5h1V-0.5h1V-2.0h1V-7.6h1V-5.2h1V-4.1h1V-7.5h1V-4.7h1V-2.7h1.5V-5.6h0.5V-8.8h1.5V-4.7h0.5V-3.4h3V-5.1h1V-10.0h1.5V-5.5h1V-4.4h3V-5.5h1V-9.7h2V-5.6h1V-3.4h1.5V-3.1h0.5V-5.8h1.5V-3.6h0.5V-5.3h1.5V-8.9h0.5V-15.9h1.5V-9.9h0.5V-4.0h1V-9.6h1V-18.7h3V-10.8h1V-5.5h2V-11.5h1V-19.5h3.5V-11.4h1V-7.3h2V-10.6h1V-20.1h3V-11.8h1V-5.1h2V-10.9h1V-19.4h3.5V-11.0h1V-6.3h2V-10.1h0.5V-18.1h1.5V-10.4h0.5V-6.5h1V-9.5h0.5V-14.9h3.5V-8.2h0.5V-4.6h1V-8.5h0.5V-15.6h3V-8.9h0.5V-4.7h2V-7.8h0.5V-14.3h3.5V-7.2h0.5V-3.3h1V-2.8h1V-2.1h1V-2.3h1V-2.6h1V-5.3h1V-6.6h1V-4.2h1V-3.4h1V-2.8h1V-6.1h1V-6.2h1V-7.1h1V-3.8h1V-2.1h1V-3.0h1V-4.3h1V-5.8h1V-7.0h1V-5.1h1V-4.5h1V-1.9h1V-1.2h1V-0.8h1V-0.7h1V-0.6h1V-0.5h1V-0.6h1V-1.6h1V-4.4h1V-3.8h1V-1.1h1V-1.4h1V-1.9h1V-1.9h1V-4.1h1V-2.4h1V-1.6h1V-0.9h0.5V0.9h-0.5V1.6h-1V2.4h-1V4.1h-1V1.9h-1V1.9h-1V1.4h-1V1.1h-1V3.8h-1V4.4h-1V1.6h-1V0.6h-1V0.5h-1V0.6h-1V0.7h-1V0.8h-1V1.2h-1V1.9h-1V4.5h-1V5.1h-1V7.0h-1V5.8h-1V4.3h-1V3.0h-1V2.1h-1V3.8h-1V7.1h-1V6.2h-1V6.1h-1V2.8h-1V3.4h-1V4.2h-1V6.6h-1V5.3h-1V2.6h-1V2.3h-1V2.1h-1V2.8h-1V3.3h-1V7.2h-0.5V14.3h-3.5V7.8h-0.5V4.7h-2V8.9h-0.5V15.6h-3V8.5h-0.5V4.6h-1V8.2h-0.5V14.9h-3.5V9.5h-0.5V6.5h-1V10.4h-0.5V18.1h-1.5V10.1h-0.5V6.3h-2V11.0h-1V19.4h-3.5V10.9h-1V5.1h-2V11.8h-1V20.1h-3V10.6h-1V7.3h-2V11.4h-1V19.5h-3.5V11.5h-1V5.5h-2V10.8h-1V18.7h-3V9.6h-1V4.0h-1V9.9h-0.5V15.9h-1.5V8.9h-0.5V5.3h-1.5V3.6h-0.5V5.8h-1.5V3.1h-0.5V3.4h-1.5V5.6h-1V9.7h-2V5.5h-1V4.4h-3V5.5h-1V10.0h-1.5V5.1h-1V3.4h-3V4.7h-0.5V8.8h-1.5V5.6h-0.5V2.7h-1.5V4.7h-1V7.5h-1V4.1h-1V5.2h-1V7.6h-1V2.0h-1V0.5h-1V0.5h-1V0.5h-1V1.0h-1V2.8h-1V2.9h-1V3.4h-1V1.6h-1V4.8h-1V8.1h-1V4.8h-1V2.0h-1.5V4.5h-0.5V8.0h-1.5V4.2h-0.5V2.9h-3V6.1h-1V10.2h-1V6.5h-1V3.9h-1V5.0h-0.5V9.7h-1V5.8h-0.5V5.8h-3V7.3h-0.5V13.1h-1V7.3h-0.5V3.8h-3V7.8h-0.5V12.4h-1.5V7.8h-0.5V4.4h-3V7.0h-0.5V12.8h-2V7.0h-0.5V3.3h-3V5.8h-0.5V11.3h-1.5V6.3h-0.5V3.3h-1.5V6.4h-0.5V11.0h-1.5V6.0h-0.5V3.5h-1.5V5.2h-1V10.3h-1V5.3h-1V3.1h-2V7.4h-1V13.2h-1V8.1h-1V3.0h-1.5V6.9h-1V13.1h-2V7.5h-1V5.6h-3V7.8h-0.5V15.5h-1.5V8.1h-0.5V4.3h-2V9.4h-0.5V15.3h-1V9.2h-0.5V7.0h-1.5V7.1h-0.5V14.0h-1.5V7.1h-0.5V5.5h-3V7.6h-1V14.2h-1V7.7h-1V3.8h-2V6.8h-1V13.6h-1V7.1h-1V3.5h-2V7.3h-0.5V11.9h-1V7.6h-0.5V3.9h-1.5V6.7h-0.5V11.7h-1V6.1h-0.5V3.4h-2V5.9h-1V10.6h-1.5V5.4h-1V5.9h-1.5V6.5h-1V11.5h-2V7.3h-1V5.6h-2V5.2h-1V8.7h-1V5.3h-1V5.8h-3V7.3h-1V13.1h-1V6.8h-1V5.4h-2V10.0h-0.5V18.6h-1V11.3h-0.5V4.3h-1V7.0h-0.5V13.9h-1V8.7h-0.5V6.3h-1V10.6h-1V16.6h-2V10.3h-1V6.2h-1V9.5h-1V16.5h-3V10.4h-1V5.7h-1V7.7h-1V14.5h-2V7.4h-1V6.1h-1V8.3h-0.5V15.7h-3V9.2h-0.5V8.0h-1.5V7.7h-0.5V14.7h-3V8.0h-0.5V6.8h-2V8.6h-1V16.3h-2V10.0h-1V7.9h-1.5V10.1h-1V17.1h-3V9.5h-1V6.9h-2V7.9h-1V12.8h-2V6.8h-1V5.4h-1.5V9.0h-0.5V14.5h-1V8.5h-0.5V5.4h-1V8.1h-1V14.1h-2V8.6h-1V5.6h-2V9.8h-0.5V15.4h-1V8.2h-0.5V5.6h-1V7.0h-0.5V13.9h-1V7.4h-0.5V6.6h-1.5V9.3h-1V14.8h-1V9.0h-1V8.6h-1.5V12.3h-1V19.8h-1V11.2h-1V9.7h-1V11.2h-0.5V19.2h-3V10.4h-0.5V9.9h-1V12.1h-0.5V19.9h-1V10.4h-0.5V7.9h-2V10.4h-1V16.8h-3V9.2h-1V7.5h-1V10.6h-1V19.2h-2V12.1h-1V7.4h-2V10.6h-1V17.4h-2V10.0h-1V10.1h-1V9.2h-1V17.0h-2V8.7h-1V10.8h-1V9.8h-1V15.5h-2V9.5h-1V6.8h-1.5V10.6h-0.5V18.7h-1V10.7h-0.5V6.7h-1V8.8h-1V15.1h-3V9.6h-1V11.3h-1.5V9.9h-1V18.1h-2V9.1h-1V7.7h-1.5V11.6h-1V19.0h-3V10.2h-1V6.6h-1V9.0h-1V16.4h-2V8.6h-1V7.5h-1V8.1h-0.5V16.1h-1V8.6h-0.5V6.3h-2V6.6h-1V13.0h-1V7.4h-1V7.9h-1V8.1h-0.5V14.2h-1V8.3h-0.5V9.2h-1V8.2h-0.5V14.9h-1V8.0h-0.5V7.1h-2V8.8h-1V15.9h-1V8.8h-1V6.3h-1V9.1h-0.5V15.0h-1.5V8.5h-0.5V8.5h-1V8.7h-1V17.0h-2V9.6h-1V6.6h-1V9.7h-1V15.9h-1V8.6h-1V6.1h-1V9.8h-1V18.5h-3V11.8h-1V8.6h-1V10.0h-0.5V16.3h-1.5V8.3h-0.5V6.0h-1.5V8.3h-0.5V14.5h-2V8.3h-0.5V7.7h-1V10.6h-0.5V17.3h-3V9.0h-0.5V9.8h-1V11.1h-0.5V17.6h-1V10.8h-0.5V6.9h-1V10.1h-0.5V17.6h-3V10.0h-0.5V7.7h-1V10.2h-1V19.4h-3V9.8h-1V7.7h-1.5V11.4h-1V19.6h-2V11.3h-1V8.7h-2V7.4h-1V14.7h-1.5V9.0h-1V6.0h-1V9.7h-1V16.9h-1V10.3h-1V10.0h-1V8.3h-1V14.9h-1V8.8h-1V9.4h-1V8.0h-0.5V13.8h-2V8.2h-0.5V6.4h-1V6.7h-1V10.9h-2V6.3h-1Z"/></svg>
<svg style="left:1215.5px;top:666.2px" width="474" height="48" viewBox="0 -24 474 48"><path fill="#875fb4" d="M0 -3.0V-3.0h1.5V-3.2h1.5V-3.2h1.5V-2.6h1.5V-3.6h1.5V-4.2h1.5V-3.8h1.5V-3.7h1.5V-3.7h1.5V-3.9h1.5V-5.6h1.5V-5.7h1.5V-5.6h1.5V-4.1h1.5V-5.3h1.5V-6.1h1.5V-5.0h1.5V-5.7h1.5V-5.2h1.5V-6.4h1.5V-7.0h1.5V-6.8h1.5V-7.3h1.5V-8.9h1.5V-5.2h1.5V-5.2h1.5V-3.7h1.5V-8.3h1.5V-4.9h1.5V-9.3h1.5V-4.8h1.5V-5.3h1.5V-5.7h1.5V-4.6h1.5V-4.9h1.5V-4.0h1.5V-5.3h1.5V-4.5h1.5V-7.4h1.5V-3.6h1.5V-4.3h1.5V-3.9h1.5V-4.2h1.5V-4.5h1.5V-4.1h1.5V-4.5h1.5V-5.9h1.5V-4.3h1.5V-3.9h1.5V-4.7h1.5V-6.5h1.5V-3.6h1.5V-5.5h1.5V-5.2h1.5V-5.7h1.5V-4.9h1.5V-4.6h1.5V-4.5h1.5V-5.3h1.5V-5.2h1.5V-4.3h1.5V-4.1h1.5V-4.6h1.5V-3.9h1.5V-4.7h1.5V-4.1h1.5V-3.5h1.5V-4.4h1.5V-3.8h1.5V-4.3h1.5V-4.2h1.5V-3.8h1.5V-3.6h1.5V-4.3h1.5V-3.6h1.5V-4.0h1.5V-3.2h1.5V-3.4h1.5V-3.7h1.5V-3.9h1.5V-3.5h1.5V-3.9h1.5V-3.4h1.5V-4.0h1.5V-4.1h1.5V-3.7h1.5V-3.3h1.5V-4.4h1.5V-4.2h1.5V-5.0h1.5V-4.5h1.5V-4.7h1.5V-5.0h1.5V-5.3h1.5V-5.2h1.5V-5.6h1.5V-5.4h1.5V-9.2h1.5V-7.6h1.5V-6.9h1.5V-8.5h1.5V-6.2h1.5V-7.5h1.5V-10.1h1.5V-5.4h1.5V-4.7h1.5V-6.9h1.5V-3.9h1.5V-4.3h1.5V-5.3h1.5V-4.5h1.5V-4.8h1.5V-4.1h1.5V-4.8h1.5V-5.8h1.5V-5.3h1.5V-5.3h1.5V-5.3h1.5V-4.2h1.5V-5.1h1.5V-4.9h1.5V-4.0h1.5V-4.1h1.5V-4.7h1.5V-3.9h1.5V-4.3h1.5V-4.1h1.5V-4.5h1.5V-5.3h1.5V-4.9h1.5V-4.5h1.5V-8.0h1.5V-4.7h1.5V-6.5h1.5V-5.6h1.5V-6.2h1.5V-5.6h1.5V-5.5h1.5V-6.3h1.5V-5.3h1.5V-4.8h1.5V-4.3h1.5V-4.5h1.5V-4.9h1.5V-3.8h1.5V-4.5h1.5V-5.2h1.5V-3.9h1.5V-4.5h1.5V-5.0h1.5V-4.6h1.5V-4.6h1.5V-6.4h1.5V-4.8h1.5V-4.5h1.5V-5.8h1.5V-4.9h1.5V-6.8h1.5V-5.1h1.5V-5.0h1.5V-4.3h1.5V-7.5h1.5V-5.5h1.5V-8.0h1.5V-5.8h1.5V-8.4h1.5V-5.4h1.5V-8.4h1.5V-7.1h1.5V-15.1h1.5V-21.6h1.5V-15.1h1.5V-8.3h1.5V-10.0h1.5V-7.5h1.5V-8.8h1.5V-6.1h1.5V-5.8h1.5V-6.0h1.5V-4.2h1.5V-4.0h1.5V-4.2h1.5V-4.2h1.5V-3.7h1.5V-3.6h1.5V-4.5h1.5V-3.5h1.5V-4.6h1.5V-3.9h1.5V-3.1h1.5V-3.5h1.5V-4.4h1.5V-4.3h1.5V-3.7h1.5V-3.5h1.5V-4.2h1.5V-5.1h1.5V-4.8h1.5V-5.6h1.5V-6.6h1.5V-5.7h1.5V-4.6h1.5V-4.7h1.5V-4.6h1.5V-4.3h1.5V-4.0h1.5V-4.0h1.5V-3.8h1.5V-4.1h1.5V-4.6h1.5V-3.4h1.5V-4.1h1.5V-3.6h1.5V-5.1h1.5V-4.7h1.5V-5.0h1.5V-4.7h1.5V-5.2h1.5V-4.6h1.5V-5.4h1.5V-5.3h1.5V-7.5h1.5V-4.5h1.5V-4.7h1.5V-4.2h1.5V-3.5h1.5V-3.6h1.5V-4.7h1.5V-4.6h1.5V-3.1h1.5V-4.1h1.5V-3.4h1.5V-3.7h1.5V-5.4h1.5V-4.4h1.5V-5.9h1.5V-5.2h1.5V-7.1h1.5V-8.3h1.5V-6.6h1.5V-6.8h1.5V-5.9h1.5V-8.0h1.5V-4.1h1.5V-3.9h1.5V-4.2h1.5V-5.7h1.5V-3.6h1.5V-3.8h1.5V-3.5h1.5V-4.0h1.5V-6.0h1.5V-7.5h1.5V-5.1h1.5V-6.4h1.5V-6.2h1.5V-6.5h1.5V-5.3h1.5V-6.8h1.5V-4.4h1.5V-4.3h1.5V-5.4h1.5V-5.7h1.5V-4.0h1.5V-5.6h1.5V-4.1h1.5V-4.8h1.5V-4.6h1.5V-4.4h1.5V-4.9h1.5V-5.5h1.5V-5.8h1.5V-5.9h1.5V-6.7h1.5V-7.9h1.5V-7.6h1.5V-7.3h1.5V-7.1h1.5V-5.0h1.5V-6.9h1.5V-6.1h1.5V-3.8h1.5V-4.7h1.5V-4.7h1.5V-3.7h1.5V-5.0h1.5V-3.9h1.5V-2.9h1.5V-2.8h1.5V-3.1h1.5V-3.8h1.5V-2.8h1.5V-2.8h1.5V-2.7h1.5V-3.1h1.5V-3.0h1.5V-2.2h1.5V-3.7h1.5V-2.0h1.5V-2.3h1.5V-2.5h1.5V-2.3h1.5V-2.1h1.5V-2.5h1.5V-2.1h1.5V-2.2h1.5V-2.0h1.5V-2.0h1.5V-1.9h1.5V-1.6h1.5V-1.4h1.5V-2.0h1.5V-1.6h1.5V-1.5h1.5V1.5h-1.5V1.6h-1.5V2.0h-1.5V1.4h-1.5V1.6h-1.5V1.9h-1.5V2.0h-1.5V2.0h-1.5V2.2h-1.5V2.1h-1.5V2.5h-1.5V2.1h-1.5V2.3h-1.5V2.5h-1.5V2.3h-1.5V2.0h-1.5V3.7h-1.5V2.2h-1.5V3.0h-1.5V3.1h-1.5V2.7h-1.5V2.8h-1.5V2.8h-1.5V3.8h-1.5V3.1h-1.5V2.8h-1.5V2.9h-1.5V3.9h-1.5V5.0h-1.5V3.7h-1.5V4.7h-1.5V4.7h-1.5V3.8h-1.5V6.1h-1.5V6.9h-1.5V5.0h-1.5V7.1h-1.5V7.3h-1.5V7.6h-1.5V7.9h-1.5V6.7h-1.5V5.9h-1.5V5.8h-1.5V5.5h-1.5V4.9h-1.5V4.4h-1.5V4.6h-1.5V4.8h-1.5V4.1h-1.5V5.6h-1.5V4.0h-1.5V5.7h-1.5V5.4h-1.5V4.3h-1.5V4.4h-1.5V6.8h-1.5V5.3h-1.5V6.5h-1.5V6.2h-1.5V6.4h-1.5V5.1h-1.5V7.5h-1.5V6.0h-1.5V4.0h-1.5V3.5h-1.5V3.8h-1.5V3.6h-1.5V5.7h-1.5V4.2h-1.5V3.9h-1.5V4.1h-1.5V8.0h-1.5V5.9h-1.5V6.8h-1.5V6.6h-1.5V8.3h-1.5V7.1h-1.5V5.2h-1.5V5.9h-1.5V4.4h-1.5V5.4h-1.5V3.7h-1.5V3.4h-1.5V4.1h-1.5V3.1h-1.5V4.6h-1.5V4.7h-1.5V3.6h-1.5V3.5h-1.5V4.2h-1.5V4.7h-1.5V4.5h-1.5V7.5h-1.5V5.3h-1.5V5.4h-1.5V4.6h-1.5V5.2h-1.5V4.7h-1.5V5.0h-1.5V4.7h-1.5V5.1h-1.5V3.6h-1.5V4.1h-1.5V3.4h-1.5V4.6h-1.5V4.1h-1.5V3.8h-1.5V4.0h-1.5V4.0h-1.5V4.3h-1.5V4.6h-1.5V4.7h-1.5V4.6h-1.5V5.7h-1.5V6.6h-1.5V5.6h-1.5V4.8h-1.5V5.1h-1.5V4.2h-1.5V3.5h-1.5V3.7h-1.5V4.3h-1.5V4.4h-1.5V3.5h-1.5V3.1h-1.5V3.9h-1.5V4.6h-1.5V3.5h-1.5V4.5h-1.5V3.6h-1.5V3.7h-1.5V4.2h-1.5V4.2h-1.5V4.0h-1.5V4.2h-1.5V6.0h-1.5V5.8h-1.5V6.1h-1.5V8.8h-1.5V7.5h-1.5V10.0h-1.5V8.3h-1.5V15.1h-1.5V21.6h-1.5V15.1h-1.5V7.1h-1.5V8.4h-1.5V5.4h-1.5V8.4h-1.5V5.8h-1.5V8.0h-1.5V5.5h-1.5V7.5h-1.5V4.3h-1.5V5.0h-1.5V5.1h-1.5V6.8h-1.5V4.9h-1.5V5.8h-1.5V4.5h-1.5V4.8h-1.5V6.4h-1.5V4.6h-1.5V4.6h-1.5V5.0h-1.5V4.5h-1.5V3.9h-1.5V5.2h-1.5V4.5h-1.5V3.8h-1.5V4.9h-1.5V4.5h-1.5V4.3h-1.5V4.8h-1.5V5.3h-1.5V6.3h-1.5V5.5h-1.5V5.6h-1.5V6.2h-1.5V5.6h-1.5V6.5h-1.5V4.7h-1.5V8.0h-1.5V4.5h-1.5V4.9h-1.5V5.3h-1.5V4.5h-1.5V4.1h-1.5V4.3h-1.5V3.9h-1.5V4.7h-1.5V4.1h-1.5V4.0h-1.5V4.9h-1.5V5.1h-1.5V4.2h-1.5V5.3h-1.5V5.3h-1.5V5.3h-1.5V5.8h-1.5V4.8h-1.5V4.1h-1.5V4.8h-1.5V4.5h-1.5V5.3h-1.5V4.3h-1.5V3.9h-1.5V6.9h-1.5V4.7h-1.5V5.4h-1.5V10.1h-1.5V7.5h-1.5V6.2h-1.5V8.5h-1.5V6.9h-1.5V7.6h-1.5V9.2h-1.5V5.4h-1.5V5.6h-1.5V5.2h-1.5V5.3h-1.5V5.0h-1.5V4.7h-1.5V4.5h-1.5V5.0h-1.5V4.2h-1.5V4.4h-1.5V3.3h-1.5V3.7h-1.5V4.1h-1.5V4.0h-1.5V3.4h-1.5V3.9h-1.5V3.5h-1.5V3.9h-1.5V3.7h-1.5V3.4h-1.5V3.2h-1.5V4.0h-1.5V3.6h-1.5V4.3h-1.5V3.6h-1.5V3.8h-1.5V4.2h-1.5V4.3h-1.5V3.8h-1.5V4.4h-1.5V3.5h-1.5V4.1h-1.5V4.7h-1.5V3.9h-1.5V4.6h-1.5V4.1h-1.5V4.3h-1.5V5.2h-1.5V5.3h-1.5V4.5h-1.5V4.6h-1.5V4.9h-1.5V5.7h-1.5V5.2h-1.5V5.5h-1.5V3.6h-1.5V6.5h-1.5V4.7h-1.5V3.9h-1.5V4.3h-1.5V5.9h-1.5V4.5h-1.5V4.1h-1.5V4.5h-1.5V4.2h-1.5V3.9h-1.5V4.3h-1.5V3.6h-1.5V7.4h-1.5V4.5h-1.5V5.3h-1.5V4.0h-1.5V4.9h-1.5V4.6h-1.5V5.7h-1.5V5.3h-1.5V4.8h-1.5V9.3h-1.5V4.9h-1.5V8.3h-1.5V3.7h-1.5V5.2h-1.5V5.2h-1.5V8.9h-1.5V7.3h-1.5V6.8h-1.5V7.0h-1.5V6.4h-1.5V5.2h-1.5V5.7h-1.5V5.0h-1.5V6.1h-1.5V5.3h-1.5V4.1h-1.5V5.6h-1.5V5.7h-1.5V5.6h-1.5V3.9h-1.5V3.7h-1.5V3.7h-1.5V3.8h-1.5V4.2h-1.5V3.6h-1.5V2.6h-1.5V3.2h-1.5V3.2h-1.5V3.0h-1.5Z"/></svg>
<svg style="left:1215.5px;top:714.1px" width="474" height="48" viewBox="0 -24 474 48"><path fill="#875fb4" d="M0 -3.2V-3.2h1.5V-2.9h1.5V-2.5h1.5V-3.0h1.5V-3.0h1.5V-2.9h1.5V-3.6h1.5V-3.7h1.5V-3.5h1.5V-4.6h1.5V-4.9h1.5V-5.0h1.5V-4.1h1.5V-5.4h1.5V-5.0h1.5V-5.5h1.5V-6.3h1.5V-5.0h1.5V-5.5h1.5V-6.8h1.5V-6.5h1.5V-6.9h1.5V-5.0h1.5V-6.0h1.5V-8.9h1.5V-5.5h1.5V-4.1h1.5V-4.4h1.5V-5.9h1.5V-6.1h1.5V-4.2h1.5V-3.9h1.5V-4.9h1.5V-4.0h1.5V-4.7h1.5V-7.0h1.5V-4.6h1.5V-5.6h1.5V-4.8h1.5V-4.4h1.5V-4.1h1.5V-4.6h1.5V-4.1h1.5V-6.2h1.5V-3.8h1.5V-5.3h1.5V-4.1h1.5V-4.3h1.5V-3.9h1.5V-4.9h1.5V-4.1h1.5V-4.4h1.5V-4.2h1.5V-4.3h1.5V-5.1h1.5V-5.3h1.5V-6.1h1.5V-4.6h1.5V-4.3h1.5V-4.4h1.5V-4.9h1.5V-3.5h1.5V-5.4h1.5V-3.6h1.5V-3.9h1.5V-6.2h1.5V-4.6h1.5V-3.9h1.5V-4.4h1.5V-4.5h1.5V-4.3h1.5V-4.1h1.5V-3.5h1.5V-3.9h1.5V-4.1h1.5V-4.3h1.5V-4.7h1.5V-6.2h1.5V-4.2h1.5V-4.2h1.5V-3.9h1.5V-3.2h1.5V-4.1h1.5V-3.9h1.5V-3.3h1.5V-3.1h1.5V-4.4h1.5V-6.9h1.5V-3.6h1.5V-3.9h1.5V-5.4h1.5V-4.7h1.5V-4.6h1.5V-7.8h1.5V-5.9h1.5V-6.1h1.5V-5.1h1.5V-5.3h1.5V-6.2h1.5V-8.0h1.5V-5.5h1.5V-5.7h1.5V-5.6h1.5V-6.9h1.5V-5.3h1.5V-6.1h1.5V-4.3h1.5V-4.1h1.5V-5.0h1.5V-4.1h1.5V-4.4h1.5V-4.5h1.5V-4.7h1.5V-5.0h1.5V-5.6h1.5V-5.9h1.5V-4.9h1.5V-6.5h1.5V-6.0h1.5V-5.5h1.5V-6.2h1.5V-5.4h1.5V-4.3h1.5V-3.9h1.5V-4.5h1.5V-3.8h1.5V-4.4h1.5V-8.3h1.5V-5.0h1.5V-5.1h1.5V-4.5h1.5V-4.4h1.5V-5.5h1.5V-4.6h1.5V-4.8h1.5V-5.8h1.5V-5.8h1.5V-8.5h1.5V-4.3h1.5V-4.3h1.5V-4.0h1.5V-5.3h1.5V-6.7h1.5V-4.9h1.5V-7.5h1.5V-4.9h1.5V-5.1h1.5V-5.4h1.5V-4.8h1.5V-4.8h1.5V-4.9h1.5V-6.3h1.5V-4.9h1.5V-5.3h1.5V-5.9h1.5V-4.7h1.5V-5.3h1.5V-5.3h1.5V-5.6h1.5V-5.6h1.5V-4.3h1.5V-5.5h1.5V-4.7h1.5V-4.4h1.5V-5.6h1.5V-4.2h1.5V-5.1h1.5V-8.0h1.5V-7.0h1.5V-12.8h1.5V-18.3h1.5V-12.8h1.5V-9.3h1.5V-7.6h1.5V-8.2h1.5V-7.6h1.5V-9.1h1.5V-4.9h1.5V-6.4h1.5V-5.6h1.5V-4.9h1.5V-3.6h1.5V-5.0h1.5V-4.4h1.5V-4.2h1.5V-4.0h1.5V-4.0h1.5V-4.0h1.5V-3.2h1.5V-3.5h1.5V-3.6h1.5V-4.3h1.5V-4.4h1.5V-3.3h1.5V-3.5h1.5V-5.9h1.5V-4.8h1.5V-5.5h1.5V-5.4h1.5V-6.6h1.5V-5.7h1.5V-7.1h1.5V-5.9h1.5V-6.6h1.5V-4.5h1.5V-4.8h1.5V-3.8h1.5V-4.3h1.5V-3.7h1.5V-4.0h1.5V-4.1h1.5V-4.1h1.5V-7.0h1.5V-4.8h1.5V-4.0h1.5V-5.0h1.5V-6.1h1.5V-4.9h1.5V-7.0h1.5V-5.4h1.5V-4.5h1.5V-7.8h1.5V-5.1h1.5V-4.0h1.5V-3.8h1.5V-4.0h1.5V-5.8h1.5V-3.9h1.5V-3.8h1.5V-3.8h1.5V-3.5h1.5V-4.1h1.5V-3.7h1.5V-4.1h1.5V-4.6h1.5V-5.2h1.5V-4.7h1.5V-5.9h1.5V-6.1h1.5V-5.6h1.5V-5.3h1.5V-4.7h1.5V-4.2h1.5V-4.5h1.5V-4.7h1.5V-4.7h1.5V-3.9h1.5V-4.4h1.5V-4.8h1.5V-4.1h1.5V-4.1h1.5V-5.5h1.5V-7.6h1.5V-7.7h1.5V-5.6h1.5V-8.9h1.5V-6.2h1.5V-6.7h1.5V-5.0h1.5V-5.4h1.5V-4.9h1.5V-5.8h1.5V-4.9h1.5V-5.7h1.5V-4.3h1.5V-4.9h1.5V-5.0h1.5V-4.5h1.5V-5.5h1.5V-5.0h1.5V-4.7h1.5V-6.3h1.5V-5.7h1.5V-6.9h1.5V-6.5h1.5V-6.9h1.5V-6.4h1.5V-5.6h1.5V-6.2h1.5V-6.3h1.5V-4.7h1.5V-4.3h1.5V-4.1h1.5V-3.3h1.5V-3.9h1.5V-3.8h1.5V-3.9h1.5V-3.4h1.5V-3.1h1.5V-4.6h1.5V-2.6h1.5V-3.1h1.5V-2.9h1.5V-2.9h1.5V-3.0h1.5V-2.8h1.5V-2.9h1.5V-2.7h1.5V-2.6h1.5V-1.9h1.5V-2.4h1.5V-2.3h1.5V-2.1h1.5V-2.3h1.5V-2.6h1.5V-1.8h1.5V-2.1h1.5V-1.7h1.5V-1.6h1.5V-1.7h1.5V-1.4h1.5V-1.6h1.5V-1.3h1.5V-1.4h1.5V1.4h-1.5V1.3h-1.5V1.6h-1.5V1.4h-1.5V1.7h-1.5V1.6h-1.5V1.7h-1.5V2.1h-1.5V1.8h-1.5V2.6h-1.5V2.3h-1.5V2.1h-1.5V2.3h-1.5V2.4h-1.5V1.9h-1.5V2.6h-1.5V2.7h-1.5V2.9h-1.5V2.8h-1.5V3.0h-1.5V2.9h-1.5V2.9h-1.5V3.1h-1.5V2.6h-1.5V4.6h-1.5V3.1h-1.5V3.4h-1.5V3.9h-1.5V3.8h-1.5V3.9h-1.5V3.3h-1.5V4.1h-1.5V4.3h-1.5V4.7h-1.5V6.3h-1.5V6.2h-1.5V5.6h-1.5V6.4h-1.5V6.9h-1.5V6.5h-1.5V6.9h-1.5V5.7h-1.5V6.3h-1.5V4.7h-1.5V5.0h-1.5V5.5h-1.5V4.5h-1.5V5.0h-1.5V4.9h-1.5V4.3h-1.5V5.7h-1.5V4.9h-1.5V5.8h-1.5V4.9h-1.5V5.4h-1.5V5.0h-1.5V6.7h-1.5V6.2h-1.5V8.9h-1.5V5.6h-1.5V7.7h-1.5V7.6h-1.5V5.5h-1.5V4.1h-1.5V4.1h-1.5V4.8h-1.5V4.4h-1.5V3.9h-1.5V4.7h-1.5V4.7h-1.5V4.5h-1.5V4.2h-1.5V4.7h-1.5V5.3h-1.5V5.6h-1.5V6.1h-1.5V5.9h-1.5V4.7h-1.5V5.2h-1.5V4.6h-1.5V4.1h-1.5V3.7h-1.5V4.1h-1.5V3.5h-1.5V3.8h-1.5V3.8h-1.5V3.9h-1.5V5.8h-1.5V4.0h-1.5V3.8h-1.5V4.0h-1.5V5.1h-1.5V7.8h-1.5V4.5h-1.5V5.4h-1.5V7.0h-1.5V4.9h-1.5V6.1h-1.5V5.0h-1.5V4.0h-1.5V4.8h-1.5V7.0h-1.5V4.1h-1.5V4.1h-1.5V4.0h-1.5V3.7h-1.5V4.3h-1.5V3.8h-1.5V4.8h-1.5V4.5h-1.5V6.6h-1.5V5.9h-1.5V7.1h-1.5V5.7h-1.5V6.6h-1.5V5.4h-1.5V5.5h-1.5V4.8h-1.5V5.9h-1.5V3.5h-1.5V3.3h-1.5V4.4h-1.5V4.3h-1.5V3.6h-1.5V3.5h-1.5V3.2h-1.5V4.0h-1.5V4.0h-1.5V4.0h-1.5V4.2h-1.5V4.4h-1.5V5.0h-1.5V3.6h-1.5V4.9h-1.5V5.6h-1.5V6.4h-1.5V4.9h-1.5V9.1h-1.5V7.6h-1.5V8.2h-1.5V7.6h-1.5V9.3h-1.5V12.8h-1.5V18.3h-1.5V12.8h-1.5V7.0h-1.5V8.0h-1.5V5.1h-1.5V4.2h-1.5V5.6h-1.5V4.4h-1.5V4.7h-1.5V5.5h-1.5V4.3h-1.5V5.6h-1.5V5.6h-1.5V5.3h-1.5V5.3h-1.5V4.7h-1.5V5.9h-1.5V5.3h-1.5V4.9h-1.5V6.3h-1.5V4.9h-1.5V4.8h-1.5V4.8h-1.5V5.4h-1.5V5.1h-1.5V4.9h-1.5V7.5h-1.5V4.9h-1.5V6.7h-1.5V5.3h-1.5V4.0h-1.5V4.3h-1.5V4.3h-1.5V8.5h-1.5V5.8h-1.5V5.8h-1.5V4.8h-1.5V4.6h-1.5V5.5h-1.5V4.4h-1.5V4.5h-1.5V5.1h-1.5V5.0h-1.5V8.3h-1.5V4.4h-1.5V3.8h-1.5V4.5h-1.5V3.9h-1.5V4.3h-1.5V5.4h-1.5V6.2h-1.5V5.5h-1.5V6.0h-1.5V6.5h-1.5V4.9h-1.5V5.9h-1.5V5.6h-1.5V5.0h-1.5V4.7h-1.5V4.5h-1.5V4.4h-1.5V4.1h-1.5V5.0h-1.5V4.1h-1.5V4.3h-1.5V6.1h-1.5V5.3h-1.5V6.9h-1.5V5.6h-1.5V5.7h-1.5V5.5h-1.5V8.0h-1.5V6.2h-1.5V5.3h-1.5V5.1h-1.5V6.1h-1.5V5.9h-1.5V7.8h-1.5V4.6h-1.5V4.7h-1.5V5.4h-1.5V3.9h-1.5V3.6h-1.5V6.9h-1.5V4.4h-1.5V3.1h-1.5V3.3h-1.5V3.9h-1.5V4.1h-1.5V3.2h-1.5V3.9h-1.5V4.2h-1.5V4.2h-1.5V6.2h-1.5V4.7h-1.5V4.3h-1.5V4.1h-1.5V3.9h-1.5V3.5h-1.5V4.1h-1.5V4.3h-1.5V4.5h-1.5V4.4h-1.5V3.9h-1.5V4.6h-1.5V6.2h-1.5V3.9h-1.5V3.6h-1.5V5.4h-1.5V3.5h-1.5V4.9h-1.5V4.4h-1.5V4.3h-1.5V4.6h-1.5V6.1h-1.5V5.3h-1.5V5.1h-1.5V4.3h-1.5V4.2h-1.5V4.4h-1.5V4.1h-1.5V4.9h-1.5V3.9h-1.5V4.3h-1.5V4.1h-1.5V5.3h-1.5V3.8h-1.5V6.2h-1.5V4.1h-1.5V4.6h-1.5V4.1h-1.5V4.4h-1.5V4.8h-1.5V5.6h-1.5V4.6h-1.5V7.0h-1.5V4.7h-1.5V4.0h-1.5V4.9h-1.5V3.9h-1.5V4.2h-1.5V6.1h-1.5V5.9h-1.5V4.4h-1.5V4.1h-1.5V5.5h-1.5V8.9h-1.5V6.0h-1.5V5.0h-1.5V6.9h-1.5V6.5h-1.5V6.8h-1.5V5.5h-1.5V5.0h-1.5V6.3h-1.5V5.5h-1.5V5.0h-1.5V5.4h-1.5V4.1h-1.5V5.0h-1.5V4.9h-1.5V4.6h-1.5V3.5h-1.5V3.7h-1.5V3.6h-1.5V2.9h-1.5V3.0h-1.5V3.0h-1.5V2.5h-1.5V2.9h-1.5V3.2h-1.5Z"/></svg>
<svg style="left:1215.5px;top:870.3px" width="474" height="48" viewBox="0 -24 474 48"><path fill="#875fb4" d="M0 -1.4V-1.4h1.5V-2.0h1.5V-1.9h1.5V-1.2h1.5V-1.7h1.5V-1.9h1.5V-1.4h1.5V-1.9h1.5V-1.7h1.5V-1.7h1.5V-2.2h1.5V-2.0h1.5V-3.0h1.5V-2.6h1.5V-2.6h1.5V-3.2h1.5V-3.1h1.5V-2.9h1.5V-3.1h1.5V-3.7h1.5V-3.2h1.5V-3.6h1.5V-3.7h1.5V-4.3h1.5V-3.0h1.5V-2.2h1.5V-1.6h1.5V-2.7h1.5V-3.3h1.5V-2.9h1.5V-2.6h1.5V-2.7h1.5V-2.2h1.5V-1.9h1.5V-2.3h1.5V-2.4h1.5V-2.1h1.5V-1.8h1.5V-2.2h1.5V-1.9h1.5V-2.2h1.5V-2.1h1.5V-1.9h1.5V-2.3h1.5V-2.5h1.5V-2.1h1.5V-2.2h1.5V-3.0h1.5V-2.4h1.5V-2.1h1.5V-2.4h1.5V-2.0h1.5V-2.3h1.5V-3.1h1.5V-3.1h1.5V-5.3h1.5V-3.2h1.5V-3.0h1.5V-2.9h1.5V-3.5h1.5V-2.6h1.5V-2.9h1.5V-2.4h1.5V-3.5h1.5V-2.8h1.5V-2.2h1.5V-2.6h1.5V-2.6h1.5V-2.3h1.5V-2.3h1.5V-2.2h1.5V-3.0h1.5V-2.0h1.5V-2.7h1.5V-3.4h1.5V-2.7h1.5V-2.4h1.5V-2.5h1.5V-2.5h1.5V-2.5h1.5V-2.0h1.5V-2.6h1.5V-2.4h1.5V-2.7h1.5V-2.2h1.5V-2.7h1.5V-2.2h1.5V-2.8h1.5V-2.8h1.5V-2.9h1.5V-2.7h1.5V-2.9h1.5V-3.2h1.5V-3.6h1.5V-3.6h1.5V-3.2h1.5V-4.4h1.5V-4.3h1.5V-3.6h1.5V-3.9h1.5V-5.0h1.5V-4.1h1.5V-5.2h1.5V-4.1h1.5V-4.4h1.5V-3.1h1.5V-3.8h1.5V-2.9h1.5V-4.2h1.5V-3.2h1.5V-3.5h1.5V-3.5h1.5V-2.8h1.5V-3.4h1.5V-3.5h1.5V-4.3h1.5V-4.3h1.5V-3.5h1.5V-3.7h1.5V-3.5h1.5V-3.1h1.5V-2.5h1.5V-4.1h1.5V-2.6h1.5V-3.2h1.5V-2.9h1.5V-3.2h1.5V-2.8h1.5V-3.0h1.5V-3.7h1.5V-3.5h1.5V-4.0h1.5V-3.8h1.5V-3.7h1.5V-3.7h1.5V-3.8h1.5V-4.2h1.5V-4.4h1.5V-3.7h1.5V-4.5h1.5V-3.0h1.5V-3.2h1.5V-2.8h1.5V-3.6h1.5V-2.9h1.5V-4.0h1.5V-3.7h1.5V-3.0h1.5V-3.2h1.5V-3.9h1.5V-3.0h1.5V-3.5h1.5V-3.2h1.5V-5.9h1.5V-5.3h1.5V-4.1h1.5V-3.3h1.5V-4.1h1.5V-3.2h1.5V-3.0h1.5V-3.8h1.5V-3.5h1.5V-4.0h1.5V-3.2h1.5V-3.7h1.5V-4.7h1.5V-6.6h1.5V-5.5h1.5V-5.0h1.5V-6.4h1.5V-9.3h1.5V-6.4h1.5V-6.5h1.5V-6.6h1.5V-5.3h1.5V-4.8h1.5V-4.2h1.5V-4.4h1.5V-4.3h1.5V-4.6h1.5V-2.8h1.5V-3.6h1.5V-2.9h1.5V-2.5h1.5V-2.8h1.5V-3.1h1.5V-2.7h1.5V-3.1h1.5V-2.9h1.5V-2.7h1.5V-3.2h1.5V-2.3h1.5V-2.9h1.5V-2.5h1.5V-3.4h1.5V-3.3h1.5V-3.0h1.5V-2.9h1.5V-3.2h1.5V-4.3h1.5V-3.6h1.5V-3.4h1.5V-2.7h1.5V-3.0h1.5V-2.5h1.5V-2.2h1.5V-2.2h1.5V-3.1h1.5V-2.5h1.5V-2.9h1.5V-3.1h1.5V-3.4h1.5V-2.9h1.5V-2.9h1.5V-5.6h1.5V-4.1h1.5V-4.1h1.5V-3.4h1.5V-3.8h1.5V-4.1h1.5V-3.7h1.5V-3.7h1.5V-4.1h1.5V-3.5h1.5V-3.4h1.5V-3.0h1.5V-2.9h1.5V-2.3h1.5V-2.9h1.5V-2.7h1.5V-2.2h1.5V-3.3h1.5V-3.6h1.5V-3.4h1.5V-3.5h1.5V-3.7h1.5V-4.2h1.5V-5.7h1.5V-3.9h1.5V-3.8h1.5V-4.5h1.5V-4.0h1.5V-3.9h1.5V-3.5h1.5V-3.8h1.5V-4.1h1.5V-3.5h1.5V-2.5h1.5V-3.2h1.5V-2.9h1.5V-3.0h1.5V-3.4h1.5V-3.7h1.5V-5.8h1.5V-5.1h1.5V-5.3h1.5V-4.0h1.5V-5.3h1.5V-3.8h1.5V-3.9h1.5V-3.4h1.5V-6.0h1.5V-4.4h1.5V-3.9h1.5V-3.9h1.5V-3.3h1.5V-4.1h1.5V-3.4h1.5V-4.5h1.5V-4.2h1.5V-5.1h1.5V-3.7h1.5V-3.7h1.5V-5.1h1.5V-5.9h1.5V-8.5h1.5V-5.9h1.5V-3.7h1.5V-3.9h1.5V-3.7h1.5V-2.8h1.5V-2.7h1.5V-2.8h1.5V-3.1h1.5V-2.5h1.5V-2.4h1.5V-2.6h1.5V-2.3h1.5V-2.4h1.5V-1.8h1.5V-2.2h1.5V-1.8h1.5V-1.4h1.5V-1.6h1.5V-1.4h1.5V-1.6h1.5V-1.3h1.5V-1.2h1.5V-1.5h1.5V-1.5h1.5V-1.0h1.5V-1.2h1.5V-1.0h1.5V-0.8h1.5V-0.9h1.5V-1.1h1.5V-0.7h1.5V-0.6h1.5V-0.5h1.5V-0.6h1.5V-0.6h1.5V-0.5h1.5V-0.5h1.5V-0.5h1.5V0.5h-1.5V0.5h-1.5V0.5h-1.5V0.6h-1.5V0.6h-1.5V0.5h-1.5V0.6h-1.5V0.7h-1.5V1.1h-1.5V0.9h-1.5V0.8h-1.5V1.0h-1.5V1.2h-1.5V1.0h-1.5V1.5h-1.5V1.5h-1.5V1.2h-1.5V1.3h-1.5V1.6h-1.5V1.4h-1.5V1.6h-1.5V1.4h-1.5V1.8h-1.5V2.2h-1.5V1.8h-1.5V2.4h-1.5V2.3h-1.5V2.6h-1.5V2.4h-1.5V2.5h-1.5V3.1h-1.5V2.8h-1.5V2.7h-1.5V2.8h-1.5V3.7h-1.5V3.9h-1.5V3.7h-1.5V5.9h-1.5V8.5h-1.5V5.9h-1.5V5.1h-1.5V3.7h-1.5V3.7h-1.5V5.1h-1.5V4.2h-1.5V4.5h-1.5V3.4h-1.5V4.1h-1.5V3.3h-1.5V3.9h-1.5V3.9h-1.5V4.4h-1.5V6.0h-1.5V3.4h-1.5V3.9h-1.5V3.8h-1.5V5.3h-1.5V4.0h-1.5V5.3h-1.5V5.1h-1.5V5.8h-1.5V3.7h-1.5V3.4h-1.5V3.0h-1.5V2.9h-1.5V3.2h-1.5V2.5h-1.5V3.5h-1.5V4.1h-1.5V3.8h-1.5V3.5h-1.5V3.9h-1.5V4.0h-1.5V4.5h-1.5V3.8h-1.5V3.9h-1.5V5.7h-1.5V4.2h-1.5V3.7h-1.5V3.5h-1.5V3.4h-1.5V3.6h-1.5V3.3h-1.5V2.2h-1.5V2.7h-1.5V2.9h-1.5V2.3h-1.5V2.9h-1.5V3.0h-1.5V3.4h-1.5V3.5h-1.5V4.1h-1.5V3.7h-1.5V3.7h-1.5V4.1h-1.5V3.8h-1.5V3.4h-1.5V4.1h-1.5V4.1h-1.5V5.6h-1.5V2.9h-1.5V2.9h-1.5V3.4h-1.5V3.1h-1.5V2.9h-1.5V2.5h-1.5V3.1h-1.5V2.2h-1.5V2.2h-1.5V2.5h-1.5V3.0h-1.5V2.7h-1.5V3.4h-1.5V3.6h-1.5V4.3h-1.5V3.2h-1.5V2.9h-1.5V3.0h-1.5V3.3h-1.5V3.4h-1.5V2.5h-1.5V2.9h-1.5V2.3h-1.5V3.2h-1.5V2.7h-1.5V2.9h-1.5V3.1h-1.5V2.7h-1.5V3.1h-1.5V2.8h-1.5V2.5h-1.5V2.9h-1.5V3.6h-1.5V2.8h-1.5V4.6h-1.5V4.3h-1.5V4.4h-1.5V4.2h-1.5V4.8h-1.5V5.3h-1.5V6.6h-1.5V6.5h-1.5V6.4h-1.5V9.3h-1.5V6.4h-1.5V5.0h-1.5V5.5h-1.5V6.6h-1.5V4.7h-1.5V3.7h-1.5V3.2h-1.5V4.0h-1.5V3.5h-1.5V3.8h-1.5V3.0h-1.5V3.2h-1.5V4.1h-1.5V3.3h-1.5V4.1h-1.5V5.3h-1.5V5.9h-1.5V3.2h-1.5V3.5h-1.5V3.0h-1.5V3.9h-1.5V3.2h-1.5V3.0h-1.5V3.7h-1.5V4.0h-1.5V2.9h-1.5V3.6h-1.5V2.8h-1.5V3.2h-1.5V3.0h-1.5V4.5h-1.5V3.7h-1.5V4.4h-1.5V4.2h-1.5V3.8h-1.5V3.7h-1.5V3.7h-1.5V3.8h-1.5V4.0h-1.5V3.5h-1.5V3.7h-1.5V3.0h-1.5V2.8h-1.5V3.2h-1.5V2.9h-1.5V3.2h-1.5V2.6h-1.5V4.1h-1.5V2.5h-1.5V3.1h-1.5V3.5h-1.5V3.7h-1.5V3.5h-1.5V4.3h-1.5V4.3h-1.5V3.5h-1.5V3.4h-1.5V2.8h-1.5V3.5h-1.5V3.5h-1.5V3.2h-1.5V4.2h-1.5V2.9h-1.5V3.8h-1.5V3.1h-1.5V4.4h-1.5V4.1h-1.5V5.2h-1.5V4.1h-1.5V5.0h-1.5V3.9h-1.5V3.6h-1.5V4.3h-1.5V4.4h-1.5V3.2h-1.5V3.6h-1.5V3.6h-1.5V3.2h-1.5V2.9h-1.5V2.7h-1.5V2.9h-1.5V2.8h-1.5V2.8h-1.5V2.2h-1.5V2.7h-1.5V2.2h-1.5V2.7h-1.5V2.4h-1.5V2.6h-1.5V2.0h-1.5V2.5h-1.5V2.5h-1.5V2.5h-1.5V2.4h-1.5V2.7h-1.5V3.4h-1.5V2.7h-1.5V2.0h-1.5V3.0h-1.5V2.2h-1.5V2.3h-1.5V2.3h-1.5V2.6h-1.5V2.6h-1.5V2.2h-1.5V2.8h-1.5V3.5h-1.5V2.4h-1.5V2.9h-1.5V2.6h-1.5V3.5h-1.5V2.9h-1.5V3.0h-1.5V3.2h-1.5V5.3h-1.5V3.1h-1.5V3.1h-1.5V2.3h-1.5V2.0h-1.5V2.4h-1.5V2.1h-1.5V2.4h-1.5V3.0h-1.5V2.2h-1.5V2.1h-1.5V2.5h-1.5V2.3h-1.5V1.9h-1.5V2.1h-1.5V2.2h-1.5V1.9h-1.5V2.2h-1.5V1.8h-1.5V2.1h-1.5V2.4h-1.5V2.3h-1.5V1.9h-1.5V2.2h-1.5V2.7h-1.5V2.6h-1.5V2.9h-1.5V3.3h-1.5V2.7h-1.5V1.6h-1.5V2.2h-1.5V3.0h-1.5V4.3h-1.5V3.7h-1.5V3.6h-1.5V3.2h-1.5V3.7h-1.5V3.1h-1.5V2.9h-1.5V3.1h-1.5V3.2h-1.5V2.6h-1.5V2.6h-1.5V3.0h-1.5V2.0h-1.5V2.2h-1.5V1.7h-1.5V1.7h-1.5V1.9h-1.5V1.4h-1.5V1.9h-1.5V1.7h-1.5V1.2h-1.5V1.9h-1.5V2.0h-1.5V1.4h-1.5Z"/></svg>
<svg style="left:1215.5px;top:918.2px" width="474" height="48" viewBox="0 -24 474 48"><path fill="#875fb4" d="M0 -1.1V-1.1h1.5V-1.1h1.5V-1.3h1.5V-1.8h1.5V-1.4h1.5V-1.4h1.5V-1.3h1.5V-1.6h1.5V-1.5h1.5V-1.8h1.5V-2.2h1.5V-2.0h1.5V-2.0h1.5V-2.3h1.5V-2.4h1.5V-2.7h1.5V-3.2h1.5V-4.1h1.5V-3.5h1.5V-3.7h1.5V-3.6h1.5V-3.2h1.5V-4.2h1.5V-5.1h1.5V-3.2h1.5V-2.7h1.5V-1.9h1.5V-2.4h1.5V-2.4h1.5V-2.7h1.5V-2.6h1.5V-1.9h1.5V-1.9h1.5V-2.0h1.5V-2.7h1.5V-2.3h1.5V-2.2h1.5V-1.9h1.5V-3.0h1.5V-2.3h1.5V-2.4h1.5V-2.1h1.5V-2.1h1.5V-2.6h1.5V-1.9h1.5V-2.1h1.5V-2.2h1.5V-3.3h1.5V-2.0h1.5V-2.3h1.5V-2.1h1.5V-1.9h1.5V-2.1h1.5V-2.2h1.5V-3.2h1.5V-3.6h1.5V-3.3h1.5V-2.2h1.5V-2.5h1.5V-2.5h1.5V-2.4h1.5V-2.0h1.5V-2.4h1.5V-2.3h1.5V-2.5h1.5V-2.0h1.5V-2.0h1.5V-2.4h1.5V-1.9h1.5V-3.5h1.5V-2.4h1.5V-2.8h1.5V-2.0h1.5V-2.4h1.5V-1.9h1.5V-2.5h1.5V-2.5h1.5V-2.0h1.5V-2.2h1.5V-2.1h1.5V-2.4h1.5V-2.2h1.5V-2.3h1.5V-2.7h1.5V-2.0h1.5V-2.5h1.5V-2.1h1.5V-2.6h1.5V-2.7h1.5V-2.7h1.5V-2.4h1.5V-2.7h1.5V-3.2h1.5V-2.7h1.5V-3.1h1.5V-3.1h1.5V-3.4h1.5V-4.2h1.5V-3.6h1.5V-3.9h1.5V-4.8h1.5V-5.1h1.5V-4.4h1.5V-4.4h1.5V-4.1h1.5V-3.3h1.5V-3.4h1.5V-3.3h1.5V-2.6h1.5V-4.5h1.5V-3.3h1.5V-5.1h1.5V-3.4h1.5V-4.5h1.5V-3.7h1.5V-3.5h1.5V-4.1h1.5V-3.5h1.5V-3.0h1.5V-2.8h1.5V-2.6h1.5V-3.2h1.5V-2.6h1.5V-2.7h1.5V-2.8h1.5V-3.1h1.5V-3.7h1.5V-2.6h1.5V-3.4h1.5V-3.3h1.5V-3.8h1.5V-3.4h1.5V-4.0h1.5V-4.7h1.5V-3.4h1.5V-3.3h1.5V-3.2h1.5V-3.8h1.5V-3.4h1.5V-3.5h1.5V-3.8h1.5V-3.7h1.5V-3.0h1.5V-3.2h1.5V-3.4h1.5V-2.8h1.5V-3.2h1.5V-3.2h1.5V-3.4h1.5V-3.3h1.5V-3.6h1.5V-2.9h1.5V-2.9h1.5V-4.1h1.5V-3.9h1.5V-3.3h1.5V-3.6h1.5V-4.3h1.5V-4.1h1.5V-3.6h1.5V-3.0h1.5V-2.9h1.5V-3.6h1.5V-3.3h1.5V-3.7h1.5V-3.6h1.5V-3.9h1.5V-4.8h1.5V-5.4h1.5V-6.2h1.5V-8.9h1.5V-7.7h1.5V-5.6h1.5V-5.6h1.5V-5.4h1.5V-5.2h1.5V-4.4h1.5V-4.4h1.5V-4.1h1.5V-3.5h1.5V-3.3h1.5V-3.0h1.5V-2.7h1.5V-2.7h1.5V-2.6h1.5V-3.3h1.5V-2.3h1.5V-2.2h1.5V-3.2h1.5V-2.6h1.5V-3.2h1.5V-3.4h1.5V-2.4h1.5V-3.2h1.5V-3.1h1.5V-4.8h1.5V-2.9h1.5V-3.1h1.5V-2.8h1.5V-3.1h1.5V-3.8h1.5V-3.7h1.5V-3.6h1.5V-2.9h1.5V-2.9h1.5V-2.6h1.5V-2.6h1.5V-2.4h1.5V-3.1h1.5V-2.7h1.5V-2.6h1.5V-3.1h1.5V-3.0h1.5V-3.5h1.5V-3.5h1.5V-3.1h1.5V-3.9h1.5V-4.1h1.5V-3.9h1.5V-5.2h1.5V-3.4h1.5V-3.5h1.5V-3.6h1.5V-3.2h1.5V-3.3h1.5V-3.0h1.5V-2.7h1.5V-2.4h1.5V-3.1h1.5V-2.7h1.5V-2.3h1.5V-3.4h1.5V-2.5h1.5V-3.4h1.5V-3.2h1.5V-3.1h1.5V-4.2h1.5V-3.8h1.5V-4.0h1.5V-4.4h1.5V-3.4h1.5V-4.2h1.5V-3.5h1.5V-3.3h1.5V-3.8h1.5V-3.5h1.5V-3.4h1.5V-4.2h1.5V-2.7h1.5V-3.3h1.5V-3.2h1.5V-3.8h1.5V-4.7h1.5V-4.2h1.5V-5.0h1.5V-4.7h1.5V-4.2h1.5V-3.8h1.5V-3.7h1.5V-3.6h1.5V-3.9h1.5V-3.6h1.5V-3.6h1.5V-3.8h1.5V-3.7h1.5V-3.0h1.5V-3.8h1.5V-3.5h1.5V-3.6h1.5V-4.1h1.5V-4.0h1.5V-3.8h1.5V-3.5h1.5V-4.4h1.5V-5.1h1.5V-6.0h1.5V-4.2h1.5V-4.3h1.5V-3.7h1.5V-2.8h1.5V-2.7h1.5V-3.1h1.5V-2.8h1.5V-3.0h1.5V-2.3h1.5V-2.9h1.5V-3.4h1.5V-2.1h1.5V-2.0h1.5V-2.0h1.5V-1.8h1.5V-1.9h1.5V-1.6h1.5V-1.5h1.5V-1.5h1.5V-1.8h1.5V-2.3h1.5V-1.4h1.5V-1.2h1.5V-1.1h1.5V-1.1h1.5V-0.8h1.5V-0.9h1.5V-0.7h1.5V-0.8h1.5V-0.6h1.5V-0.6h1.5V-0.8h1.5V-0.6h1.5V-0.6h1.5V-0.6h1.5V-0.6h1.5V-0.5h1.5V-0.5h1.5V0.5h-1.5V0.5h-1.5V0.6h-1.5V0.6h-1.5V0.6h-1.5V0.6h-1.5V0.8h-1.5V0.6h-1.5V0.6h-1.5V0.8h-1.5V0.7h-1.5V0.9h-1.5V0.8h-1.5V1.1h-1.5V1.1h-1.5V1.2h-1.5V1.4h-1.5V2.3h-1.5V1.8h-1.5V1.5h-1.5V1.5h-1.5V1.6h-1.5V1.9h-1.5V1.8h-1.5V2.0h-1.5V2.0h-1.5V2.1h-1.5V3.4h-1.5V2.9h-1.5V2.3h-1.5V3.0h-1.5V2.8h-1.5V3.1h-1.5V2.7h-1.5V2.8h-1.5V3.7h-1.5V4.3h-1.5V4.2h-1.5V6.0h-1.5V5.1h-1.5V4.4h-1.5V3.5h-1.5V3.8h-1.5V4.0h-1.5V4.1h-1.5V3.6h-1.5V3.5h-1.5V3.8h-1.5V3.0h-1.5V3.7h-1.5V3.8h-1.5V3.6h-1.5V3.6h-1.5V3.9h-1.5V3.6h-1.5V3.7h-1.5V3.8h-1.5V4.2h-1.5V4.7h-1.5V5.0h-1.5V4.2h-1.5V4.7h-1.5V3.8h-1.5V3.2h-1.5V3.3h-1.5V2.7h-1.5V4.2h-1.5V3.4h-1.5V3.5h-1.5V3.8h-1.5V3.3h-1.5V3.5h-1.5V4.2h-1.5V3.4h-1.5V4.4h-1.5V4.0h-1.5V3.8h-1.5V4.2h-1.5V3.1h-1.5V3.2h-1.5V3.4h-1.5V2.5h-1.5V3.4h-1.5V2.3h-1.5V2.7h-1.5V3.1h-1.5V2.4h-1.5V2.7h-1.5V3.0h-1.5V3.3h-1.5V3.2h-1.5V3.6h-1.5V3.5h-1.5V3.4h-1.5V5.2h-1.5V3.9h-1.5V4.1h-1.5V3.9h-1.5V3.1h-1.5V3.5h-1.5V3.5h-1.5V3.0h-1.5V3.1h-1.5V2.6h-1.5V2.7h-1.5V3.1h-1.5V2.4h-1.5V2.6h-1.5V2.6h-1.5V2.9h-1.5V2.9h-1.5V3.6h-1.5V3.7h-1.5V3.8h-1.5V3.1h-1.5V2.8h-1.5V3.1h-1.5V2.9h-1.5V4.8h-1.5V3.1h-1.5V3.2h-1.5V2.4h-1.5V3.4h-1.5V3.2h-1.5V2.6h-1.5V3.2h-1.5V2.2h-1.5V2.3h-1.5V3.3h-1.5V2.6h-1.5V2.7h-1.5V2.7h-1.5V3.0h-1.5V3.3h-1.5V3.5h-1.5V4.1h-1.5V4.4h-1.5V4.4h-1.5V5.2h-1.5V5.4h-1.5V5.6h-1.5V5.6h-1.5V7.7h-1.5V8.9h-1.5V6.2h-1.5V5.4h-1.5V4.8h-1.5V3.9h-1.5V3.6h-1.5V3.7h-1.5V3.3h-1.5V3.6h-1.5V2.9h-1.5V3.0h-1.5V3.6h-1.5V4.1h-1.5V4.3h-1.5V3.6h-1.5V3.3h-1.5V3.9h-1.5V4.1h-1.5V2.9h-1.5V2.9h-1.5V3.6h-1.5V3.3h-1.5V3.4h-1.5V3.2h-1.5V3.2h-1.5V2.8h-1.5V3.4h-1.5V3.2h-1.5V3.0h-1.5V3.7h-1.5V3.8h-1.5V3.5h-1.5V3.4h-1.5V3.8h-1.5V3.2h-1.5V3.3h-1.5V3.4h-1.5V4.7h-1.5V4.0h-1.5V3.4h-1.5V3.8h-1.5V3.3h-1.5V3.4h-1.5V2.6h-1.5V3.7h-1.5V3.1h-1.5V2.8h-1.5V2.7h-1.5V2.6h-1.5V3.2h-1.5V2.6h-1.5V2.8h-1.5V3.0h-1.5V3.5h-1.5V4.1h-1.5V3.5h-1.5V3.7h-1.5V4.5h-1.5V3.4h-1.5V5.1h-1.5V3.3h-1.5V4.5h-1.5V2.6h-1.5V3.3h-1.5V3.4h-1.5V3.3h-1.5V4.1h-1.5V4.4h-1.5V4.4h-1.5V5.1h-1.5V4.8h-1.5V3.9h-1.5V3.6h-1.5V4.2h-1.5V3.4h-1.5V3.1h-1.5V3.1h-1.5V2.7h-1.5V3.2h-1.5V2.7h-1.5V2.4h-1.5V2.7h-1.5V2.7h-1.5V2.6h-1.5V2.1h-1.5V2.5h-1.5V2.0h-1.5V2.7h-1.5V2.3h-1.5V2.2h-1.5V2.4h-1.5V2.1h-1.5V2.2h-1.5V2.0h-1.5V2.5h-1.5V2.5h-1.5V1.9h-1.5V2.4h-1.5V2.0h-1.5V2.8h-1.5V2.4h-1.5V3.5h-1.5V1.9h-1.5V2.4h-1.5V2.0h-1.5V2.0h-1.5V2.5h-1.5V2.3h-1.5V2.4h-1.5V2.0h-1.5V2.4h-1.5V2.5h-1.5V2.5h-1.5V2.2h-1.5V3.3h-1.5V3.6h-1.5V3.2h-1.5V2.2h-1.5V2.1h-1.5V1.9h-1.5V2.1h-1.5V2.3h-1.5V2.0h-1.5V3.3h-1.5V2.2h-1.5V2.1h-1.5V1.9h-1.5V2.6h-1.5V2.1h-1.5V2.1h-1.5V2.4h-1.5V2.3h-1.5V3.0h-1.5V1.9h-1.5V2.2h-1.5V2.3h-1.5V2.7h-1.5V2.0h-1.5V1.9h-1.5V1.9h-1.5V2.6h-1.5V2.7h-1.5V2.4h-1.5V2.4h-1.5V1.9h-1.5V2.7h-1.5V3.2h-1.5V5.1h-1.5V4.2h-1.5V3.2h-1.5V3.6h-1.5V3.7h-1.5V3.5h-1.5V4.1h-1.5V3.2h-1.5V2.7h-1.5V2.4h-1.5V2.3h-1.5V2.0h-1.5V2.0h-1.5V2.2h-1.5V1.8h-1.5V1.5h-1.5V1.6h-1.5V1.3h-1.5V1.4h-1.5V1.4h-1.5V1.8h-1.5V1.3h-1.5V1.1h-1.5V1.1h-1.5Z"/></svg>
<svg style="left:1215.5px;top:966.2px" width="474" height="48" viewBox="0 -24 474 48"><path fill="#875fb4" d="M0 -14.2V-14.2h1.5V-14.1h1.5V-13.7h1.5V-15.6h1.5V-13.5h1.5V-14.3h1.5V-15.6h1.5V-4.1h1.5V-5.6h1.5V-14.4h1.5V-13.6h1.5V-14.1h1.5V-14.6h1.5V-14.2h1.5V-14.6h1.5V-13.7h1.5V-13.9h1.5V-13.7h1.5V-6.2h1.5V-6.8h1.5V-4.9h1.5V-5.6h1.5V-4.6h1.5V-5.9h1.5V-4.1h1.5V-7.5h1.5V-14.5h1.5V-14.6h1.5V-14.1h1.5V-13.6h1.5V-13.9h1.5V-13.8h1.5V-13.9h1.5V-14.7h1.5V-13.8h1.5V-15.6h1.5V-15.6h1.5V-13.6h1.5V-14.1h1.5V-14.2h1.5V-13.5h1.5V-8.3h1.5V-15.6h1.5V-13.7h1.5V-14.4h1.5V-13.8h1.5V-14.5h1.5V-15.7h1.5V-14.0h1.5V-13.7h1.5V-13.8h1.5V-14.5h1.5V-13.8h1.5V-13.9h1.5V-14.6h1.5V-16.0h1.5V-14.5h1.5V-14.5h1.5V-14.9h1.5V-14.1h1.5V-14.8h1.5V-5.3h1.5V-4.9h1.5V-5.9h1.5V-6.2h1.5V-14.8h1.5V-14.9h1.5V-14.2h1.5V-14.4h1.5V-16.0h1.5V-16.0h1.5V-14.1h1.5V-15.0h1.5V-16.0h1.5V-14.3h1.5V-14.9h1.5V-14.0h1.5V-14.5h1.5V-15.0h1.5V-14.9h1.5V-15.2h1.5V-14.1h1.5V-14.5h1.5V-16.0h1.5V-14.9h1.5V-14.6h1.5V-14.6h1.5V-16.0h1.5V-14.8h1.5V-14.0h1.5V-14.5h1.5V-12.8h1.5V-12.1h1.5V-7.8h1.5V-8.4h1.5V-7.2h1.5V-5.2h1.5V-5.8h1.5V-3.1h1.5V-3.5h1.5V-1.9h1.5V-7.2h1.5V-12.0h1.5V-10.4h1.5V-11.9h1.5V-9.2h1.5V-8.4h1.5V-3.7h1.5V-3.3h1.5V-4.9h1.5V-3.7h1.5V-9.4h1.5V-12.3h1.5V-9.5h1.5V-11.4h1.5V-8.5h1.5V-12.7h1.5V-9.2h1.5V-8.0h1.5V-9.9h1.5V-5.1h2V-3.6h3V-4.3h1.5V-2.1h1.5V-7.8h2V-2.9h2V-5.2h3V-3.1h1.5V-10.1h2V-3.4h1.5V-6.4h2V-3.7h2V-8.5h2V-4.1h2V-11.2h3V-3.9h1.5V-7.4h2V-3.4h3V-11.4h2V-4.3h1.5V-11.3h2V-3.3h2V-10.0h3V-3.8h3V-9.0h2V-4.2h3V-6.1h3V-4.0h3V-8.5h1.5V-4.4h3V-8.3h2V-2.8h1.5V-9.4h1.5V-2.8h2V-7.1h3V-3.9h3V-4.9h1.5V-2.9h2V-4.9h3V-3.0h1.5V-5.8h1.5V-2.3h3V-5.1h1.5V-2.3h1.5V-7.6h2V-2.7h1.5V-6.8h3V-3.9h2V-6.2h1.5V-3.9h2V-6.7h3V-4.9h2V-14.9h2V-3.3h2V-9.7h3V-3.7h1.5V-10.7h1.5V-2.7h1.5V-5.5h1.5V-3.5h3V-6.1h2V-3.9h3V-6.1h1.5V-3.3h3V-8.9h1.5V-3.2h3V-5.0h1.5V-3.4h2V-5.5h2V-3.6h2V-9.2h2V-4.2h3V-7.5h2V-3.0h1.5V-12.0h3V-3.5h2V-8.4h1.5V-1.7h2V-4.0h2V-2.5h2V-8.2h3V-2.7h1.5V-5.0h3V-2.9h3V-6.4h3V-2.6h2V-4.9h1.5V-2.7h3V-4.8h2V-3.5h3V-9.9h1.5V-4.6h2V-13.8h2.5V-6.7h1.5V-10.3h2.5V-7.0h1V-9.6h2.5V-6.0h1V-15.1h2V-7.3h1V-12.4h1.5V-5.4h1V-9.9h1.5V-7.8h1.5V-9.6h1.5V-5.3h1V-12.2h2V-6.6h1.5V-11.8h2.5V-6.3h1V-12.8h2V-5.8h1.5V-11.0h2V-6.5h1V-12.9h1.5V-5.4h1V-11.0h2.5V-7.3h1.5V-14.0h1.5V-4.8h1V-11.1h2V-5.7h1V-7.7h1.5V-2.9h1.5V-8.3h1.5V-3.0h2V-4.3h2V-2.7h3V-3.3h1V-2.5h1V-2.0h1V-3.3h1V-2.6h1V-3.7h1V-4.5h1V-4.6h1V-3.1h1V-1.5h1V-1.6h1V-0.9h1V-1.3h1V-0.8h1V-0.7h1V-0.9h1V-1.5h1V-1.9h1V-1.7h1V-2.3h1V-1.8h1V-1.3h1V-1.0h1V-0.8h1V-1.3h1V-1.1h1V-1.3h1V-1.8h1V-1.5h1V-1.3h1V-0.6h1V-1.0h1V1.0h-1V0.6h-1V1.3h-1V1.5h-1V1.8h-1V1.3h-1V1.1h-1V1.3h-1V0.8h-1V1.0h-1V1.3h-1V1.8h-1V2.3h-1V1.7h-1V1.9h-1V1.5h-1V0.9h-1V0.7h-1V0.8h-1V1.3h-1V0.9h-1V1.6h-1V1.5h-1V3.1h-1V4.6h-1V4.5h-1V3.7h-1V2.6h-1V3.3h-1V2.0h-1V2.5h-1V3.3h-1V2.7h-3V4.3h-2V3.0h-2V8.3h-1.5V2.9h-1.5V7.7h-1.5V5.7h-1V11.1h-2V4.8h-1V14.0h-1.5V7.3h-1.5V11.0h-2.5V5.4h-1V12.9h-1.5V6.5h-1V11.0h-2V5.8h-1.5V12.8h-2V6.3h-1V11.8h-2.5V6.6h-1.5V12.2h-2V5.3h-1V9.6h-1.5V7.8h-1.5V9.9h-1.5V5.4h-1V12.4h-1.5V7.3h-1V15.1h-2V6.0h-1V9.6h-2.5V7.0h-1V10.3h-2.5V6.7h-1.5V13.8h-2.5V4.6h-2V9.9h-1.5V3.5h-3V4.8h-2V2.7h-3V4.9h-1.5V2.6h-2V6.4h-3V2.9h-3V5.0h-3V2.7h-1.5V8.2h-3V2.5h-2V4.0h-2V1.7h-2V8.4h-1.5V3.5h-2V12.0h-3V3.0h-1.5V7.5h-2V4.2h-3V9.2h-2V3.6h-2V5.5h-2V3.4h-2V5.0h-1.5V3.2h-3V8.9h-1.5V3.3h-3V6.1h-1.5V3.9h-3V6.1h-2V3.5h-3V5.5h-1.5V2.7h-1.5V10.7h-1.5V3.7h-1.5V9.7h-3V3.3h-2V14.9h-2V4.9h-2V6.7h-3V3.9h-2V6.2h-1.5V3.9h-2V6.8h-3V2.7h-1.5V7.6h-2V2.3h-1.5V5.1h-1.5V2.3h-3V5.8h-1.5V3.0h-1.5V4.9h-3V2.9h-2V4.9h-1.5V3.9h-3V7.1h-3V2.8h-2V9.4h-1.5V2.8h-1.5V8.3h-2V4.4h-3V8.5h-1.5V4.0h-3V6.1h-3V4.2h-3V9.0h-2V3.8h-3V10.0h-3V3.3h-2V11.3h-2V4.3h-1.5V11.4h-2V3.4h-3V7.4h-2V3.9h-1.5V11.2h-3V4.1h-2V8.5h-2V3.7h-2V6.4h-2V3.4h-1.5V10.1h-2V3.1h-1.5V5.2h-3V2.9h-2V7.8h-2V2.1h-1.5V4.3h-1.5V3.6h-3V5.1h-2V9.9h-1.5V8.0h-1.5V9.2h-1.5V12.7h-1.5V8.5h-1.5V11.4h-1.5V9.5h-1.5V12.3h-1.5V9.4h-1.5V3.7h-1.5V4.9h-1.5V3.3h-1.5V3.7h-1.5V8.4h-1.5V9.2h-1.5V11.9h-1.5V10.4h-1.5V12.0h-1.5V7.2h-1.5V1.9h-1.5V3.5h-1.5V3.1h-1.5V5.8h-1.5V5.2h-1.5V7.2h-1.5V8.4h-1.5V7.8h-1.5V12.1h-1.5V12.8h-1.5V14.5h-1.5V14.0h-1.5V14.8h-1.5V16.0h-1.5V14.6h-1.5V14.6h-1.5V14.9h-1.5V16.0h-1.5V14.5h-1.5V14.1h-1.5V15.2h-1.5V14.9h-1.5V15.0h-1.5V14.5h-1.5V14.0h-1.5V14.9h-1.5V14.3h-1.5V16.0h-1.5V15.0h-1.5V14.1h-1.5V16.0h-1.5V16.0h-1.5V14.4h-1.5V14.2h-1.5V14.9h-1.5V14.8h-1.5V6.2h-1.5V5.9h-1.5V4.9h-1.5V5.3h-1.5V14.8h-1.5V14.1h-1.5V14.9h-1.5V14.5h-1.5V14.5h-1.5V16.0h-1.5V14.6h-1.5V13.9h-1.5V13.8h-1.5V14.5h-1.5V13.8h-1.5V13.7h-1.5V14.0h-1.5V15.7h-1.5V14.5h-1.5V13.8h-1.5V14.4h-1.5V13.7h-1.5V15.6h-1.5V8.3h-1.5V13.5h-1.5V14.2h-1.5V14.1h-1.5V13.6h-1.5V15.6h-1.5V15.6h-1.5V13.8h-1.5V14.7h-1.5V13.9h-1.5V13.8h-1.5V13.9h-1.5V13.6h-1.5V14.1h-1.5V14.6h-1.5V14.5h-1.5V7.5h-1.5V4.1h-1.5V5.9h-1.5V4.6h-1.5V5.6h-1.5V4.9h-1.5V6.8h-1.5V6.2h-1.5V13.7h-1.5V13.9h-1.5V13.7h-1.5V14.6h-1.5V14.2h-1.5V14.6h-1.5V14.1h-1.5V13.6h-1.5V14.4h-1.5V5.6h-1.5V4.1h-1.5V15.6h-1.5V14.3h-1.5V13.5h-1.5V15.6h-1.5V13.7h-1.5V14.1h-1.5V14.2h-1.5Z"/></svg>
<svg style="left:13px;top:137px" width="92" height="117" viewBox="0 0 92 117" font-family="Liberation Sans, sans-serif">
<defs>
<linearGradient id="tbg" x1="0" y1="0" x2="0" y2="1"><stop offset="0" stop-color="#c9cdc6"/><stop offset=".35" stop-color="#b4b9b1"/><stop offset=".62" stop-color="#6f756f"/><stop offset="1" stop-color="#3b3f3c"/></linearGradient>
<linearGradient id="tsil" x1="0" y1="0" x2="0" y2="1"><stop offset="0" stop-color="#9a9a9a"/><stop offset=".5" stop-color="#d6d6d6"/><stop offset="1" stop-color="#b9bbb8"/></linearGradient>
<filter id="b1" x="-30%" y="-30%" width="160%" height="160%"><feGaussianBlur stdDeviation="1.2"/></filter>
<filter id="b2" x="-30%" y="-30%" width="160%" height="160%"><feGaussianBlur stdDeviation="2.6"/></filter>
<filter id="b3" x="-30%" y="-30%" width="160%" height="160%"><feGaussianBlur stdDeviation="5"/></filter>
<filter id="b0" x="-30%" y="-30%" width="160%" height="160%"><feGaussianBlur stdDeviation=".55"/></filter>
<clipPath id="tcl"><rect x="0" y="16" width="92" height="101"/></clipPath>
</defs>
<rect width="92" height="117" fill="#1b1a1a"/>
<rect y="9.4" width="92" height="7" fill="url(#tsil)"/>
<rect y="16" width="92" height="101" fill="url(#tbg)"/>
<g clip-path="url(#tcl)">
 <ellipse cx="12" cy="40" rx="20" ry="28" fill="#dfe2db" filter="url(#b3)" opacity=".9"/>
 <ellipse cx="8" cy="76" rx="14" ry="16" fill="#a4a9a2" filter="url(#b3)" opacity=".75"/>
 <!-- body -->
 <path d="M24 117V92C32 78 44 70 56 68L92 60V117Z" fill="#2f3230" filter="url(#b2)"/>
 <!-- face base -->
 <path d="M45 30C48 22 60 19 72 20 82 20 90 23 92 26V70C86 74 76 76 68 72 58 68 48 60 45 50 43 42 43 36 45 30Z" fill="#8c8f8a" filter="url(#b1)"/>
 <!-- hair / dark mass -->
 <ellipse cx="70" cy="17" rx="32" ry="7" fill="#262827" filter="url(#b1)"/>
 <ellipse cx="38.5" cy="47" rx="10.5" ry="23" fill="#2d302e" filter="url(#b2)"/>
 <ellipse cx="40" cy="66" rx="12" ry="8" fill="#3a3d3b" filter="url(#b2)"/>
 <ellipse cx="44" cy="27" rx="8" ry="9" fill="#2b2d2c" filter="url(#b2)"/>
 <!-- forehead, cheek, nose highlights -->
 <ellipse cx="72" cy="24.5" rx="7" ry="3" fill="#b9bab5" filter="url(#b1)"/>
 <ellipse cx="51.5" cy="41" rx="5.6" ry="7" fill="#e2e2dd" filter="url(#b1)"/>
 <ellipse cx="76" cy="45" rx="4.2" ry="11" fill="#e9e9e5" filter="url(#b1)"/>
 <ellipse cx="75" cy="55" rx="6.5" ry="3.4" fill="#dcdcd7" filter="url(#b1)"/>
 <ellipse cx="88" cy="44" rx="4" ry="8" fill="#a9aaa5" filter="url(#b1)"/>
 <!-- eyes -->
 <ellipse cx="60" cy="31" rx="7" ry="3.8" fill="#1b1c1b" filter="url(#b0)" transform="rotate(-8 60 31)"/>
 <ellipse cx="86.5" cy="30.5" rx="7" ry="3.4" fill="#1f201f" filter="url(#b0)" transform="rotate(8 86 30)"/>
 <path d="M52 26.5C57 24 64 25 69 28" stroke="#2a2b2a" stroke-width="1.6" fill="none" filter="url(#b0)"/>
 <circle cx="60.3" cy="31.6" r="1.7" fill="#c4362d" filter="url(#b0)"/>
 <circle cx="88.5" cy="31.5" r="1.3" fill="#8d3a33" filter="url(#b0)"/>
 <!-- cheek spiral -->
 <circle cx="51.6" cy="41.6" r="3.1" fill="none" stroke="#b4504a" stroke-width="1" filter="url(#b0)"/>
 <circle cx="51.6" cy="41.6" r="1" fill="#b4504a" filter="url(#b0)"/>
 <ellipse cx="91" cy="43.5" rx="2.2" ry="3" fill="#c39a94" filter="url(#b0)"/>
 <!-- mouth / jaw -->
 <ellipse cx="73" cy="63" rx="15" ry="7.5" fill="#4a4d4a" filter="url(#b1)"/>
 <ellipse cx="75" cy="60" rx="13" ry="3.2" fill="#3a3c3a" filter="url(#b1)"/>
 <path d="M66 60V70M82 59V69" stroke="#7c7f7a" stroke-width="2" fill="none" filter="url(#b1)"/>
 <!-- bow tie -->
 <path d="M51 70C58 68 65 73 71 76 77 71 86 66 92 67V84C85 84 77 81 71 79 65 83 58 86 51 83Z" fill="#6b2722" filter="url(#b1)"/>
 <ellipse cx="71" cy="77.5" rx="3.4" ry="3.2" fill="#4e1f1c" filter="url(#b1)"/>
 <rect x="0" y="86" width="92" height="31" fill="#2a2c2b" opacity=".55" filter="url(#b2)"/>
</g>
<rect x="27" y="2.7" width="39" height="5" fill="#1b1a1a"/>
<rect x="27.2" y="2.9" width="12" height="4.6" rx=".6" fill="#f4f4f4"/>
<text x="33.2" y="6.9" font-size="4.6" font-weight="bold" text-anchor="middle" fill="#1b1a1a" textLength="10" lengthAdjust="spacingAndGlyphs">4K</text>
<rect x="40.2" y="2.9" width="25.6" height="4.6" rx=".6" fill="none" stroke="#f4f4f4" stroke-width=".5"/>
<text x="53" y="6.8" font-size="4.3" font-weight="bold" text-anchor="middle" fill="#f4f4f4" textLength="23" lengthAdjust="spacingAndGlyphs">ULTRA HD</text>
<text x="3.5" y="14.3" font-size="3.3" font-weight="bold" fill="#4b4b4b" textLength="85" lengthAdjust="spacing">4K ULTRA HD + BLU-RAY + DIGITAL DOWNLOAD</text>
<text x="15" y="21.3" font-size="3.2" font-weight="bold" fill="#6d716c" textLength="62" lengthAdjust="spacing" opacity=".8">THE GAME CONTINUES</text>
<g fill="#fff" font-weight="bold">
<text x="24.2" y="91.6" font-size="21" textLength="11" lengthAdjust="spacingAndGlyphs">JI</text>
<text x="35.2" y="88.5" font-size="14.5" textLength="7.6" lengthAdjust="spacingAndGlyphs">G</text>
<text x="43.4" y="101" font-size="14.5" textLength="6.6" lengthAdjust="spacingAndGlyphs">S</text>
<text x="50" y="101" font-size="20" textLength="18.6" lengthAdjust="spacingAndGlyphs">AW</text>
</g>
<path d="M59.5 81.2h8.5M31 96.6h8M35 93.6v6" stroke="#e9e9e9" stroke-width=".6"/>
<text x="18.5" y="108.3" font-size="3.1" font-weight="bold" fill="#c22a26" textLength="55" lengthAdjust="spacing">"DELICIOUSLY GRUESOME"</text>
<text x="45.5" y="112.6" font-size="3.4" text-anchor="middle" fill="#c22a26" textLength="12" lengthAdjust="spacingAndGlyphs">★★★★</text>
<circle cx="7.7" cy="109" r="5" fill="#e8f1f8" stroke="#3d7fc0" stroke-width="1.1"/>
<text x="7.7" y="110.9" font-size="5" font-weight="bold" text-anchor="middle" fill="#3d7fc0" textLength="5.4" lengthAdjust="spacingAndGlyphs">18</text>
<circle cx="84.4" cy="109" r="5" fill="#cf2b35" stroke="#f0d9da" stroke-width=".7"/>
<text x="84.4" y="110.9" font-size="5" font-weight="bold" text-anchor="middle" fill="#fff" textLength="5" lengthAdjust="spacingAndGlyphs">18</text>
</svg>
<svg width="0" height="0" style="left:0;top:0"><defs>
<linearGradient id="fb" x1="0" y1="0" x2="1" y2="1"><stop offset="0" stop-color="#1691f2"/><stop offset=".55" stop-color="#46aef8"/><stop offset="1" stop-color="#2a9cf4"/></linearGradient>
<linearGradient id="fo1" x1="0" y1="0" x2="0" y2="1"><stop offset="0" stop-color="#f9dc7c"/><stop offset="1" stop-color="#f3c64f"/></linearGradient>
<linearGradient id="fo2" x1="0" y1="0" x2="0" y2="1"><stop offset="0" stop-color="#fdeaa0"/><stop offset="1" stop-color="#f8d568"/></linearGradient>
<linearGradient id="wb" x1="0" y1="0" x2="0" y2="1"><stop offset="0" stop-color="#d9dadc"/><stop offset=".7" stop-color="#fff"/></linearGradient>
<linearGradient id="tr" x1="0" y1="0" x2="1" y2="0"><stop offset="0" stop-color="#8f8f8f"/><stop offset=".35" stop-color="#d9d9d9"/><stop offset=".7" stop-color="#b4b4b4"/><stop offset="1" stop-color="#858585"/></linearGradient>
<linearGradient id="fl" x1="0" y1="0" x2="0" y2="1"><stop offset="0" stop-color="#2f8fd8"/><stop offset="1" stop-color="#63b7ec"/></linearGradient>
<linearGradient id="gg" x1="0" y1="0" x2="0" y2="1"><stop offset="0" stop-color="#dcdcdc"/><stop offset="1" stop-color="#a9a9a9"/></linearGradient>
<linearGradient id="pg" x1="0" y1="0" x2="0" y2="1"><stop offset="0" stop-color="#dcdcdc"/><stop offset="1" stop-color="#f3f3f3"/></linearGradient>
<linearGradient id="pu" x1="0" y1="0" x2="1" y2="1"><stop offset="0" stop-color="#cdb2f1"/><stop offset=".6" stop-color="#a273d9"/><stop offset="1" stop-color="#8e55cf"/></linearGradient>
<linearGradient id="ga" x1="0" y1="0" x2="0" y2="1"><stop offset="0" stop-color="#7fbf17"/><stop offset=".5" stop-color="#a4d91a"/><stop offset="1" stop-color="#6fae10"/></linearGradient>
<symbol id="film" viewBox="0 0 18 21">
<rect x="3" y=".8" width="12" height="19.2" fill="#5c514b"/>
<rect x="0" y="0" width="4" height="21" rx=".8" fill="#58595b"/><rect x="14" y="0" width="4" height="21" rx=".8" fill="#58595b"/>
<g fill="#b9b9b9"><rect x="1.3" y="1.6" width="1.4" height="1.3"/><rect x="1.3" y="4.7" width="1.4" height="1.3"/><rect x="1.3" y="7.8" width="1.4" height="1.3"/><rect x="1.3" y="10.9" width="1.4" height="1.3"/><rect x="1.3" y="14" width="1.4" height="1.3"/><rect x="1.3" y="17.1" width="1.4" height="1.3"/>
<rect x="15.3" y="1.6" width="1.4" height="1.3"/><rect x="15.3" y="4.7" width="1.4" height="1.3"/><rect x="15.3" y="7.8" width="1.4" height="1.3"/><rect x="15.3" y="10.9" width="1.4" height="1.3"/><rect x="15.3" y="14" width="1.4" height="1.3"/><rect x="15.3" y="17.1" width="1.4" height="1.3"/></g>
<rect x="3.9" y="1.8" width="10.2" height="8" fill="url(#fb)"/><rect x="3.9" y="11" width="10.2" height="7.9" fill="url(#fb)"/>
<path d="M4 6.5C7 4 11 3.2 14 3.4V4.6C11 4.4 7 5.4 4 7.8Z M4 15.7C7 13.2 11 12.4 14 12.6V13.8C11 13.6 7 14.6 4 17Z" fill="#fff" opacity=".28"/>
</symbol>
<symbol id="lst" viewBox="0 0 22 21">
<rect x=".5" y=".5" width="21" height="20" rx=".8" fill="url(#wb)" stroke="#469bd0"/>
<rect x=".5" y=".5" width="21" height="3.6" fill="#3a9ad9"/><rect x="1" y="4.1" width="20" height="1" fill="#a9d4ef"/>
<rect x=".3" y="19.6" width="21.4" height="1.2" rx=".5" fill="#356f90"/>
<g fill="#5c8fdc"><rect x="3.1" y="6.1" width="1.1" height="1" opacity=".5"/><rect x="3.1" y="8.1" width="1.1" height="1"/><rect x="3.1" y="10.1" width="1.1" height="1"/><rect x="3.1" y="12.2" width="1.1" height="1" opacity=".5"/><rect x="3.1" y="14.9" width="1.1" height="1" opacity=".3"/><rect x="3.1" y="17.1" width="1.1" height="1"/></g>
<g fill="#6f7072"><rect x="5" y="6.1" width="13.6" height="1" opacity=".5"/><rect x="5" y="8.1" width="13.6" height="1" opacity=".9"/><rect x="5" y="10.1" width="13.6" height="1" opacity=".85"/><rect x="5" y="12.2" width="13.6" height="1" opacity=".45"/><rect x="5" y="14.9" width="13.6" height="1" opacity=".3"/><rect x="5" y="17.1" width="13.6" height="1" opacity=".75"/></g>
</symbol>
</defs></svg>
<svg style="left:12px;top:10px" width="25" height="26" viewBox="0 0 25 26">
<rect x="4" y="1.2" width="15" height="13" fill="#17120f"/><rect x="6.2" y="1.8" width="10.6" height="12" fill="url(#pu)"/>
<g fill="#6b5a4a"><rect x="4.6" y="2.4" width="1" height="1"/><rect x="4.6" y="5" width="1" height="1"/><rect x="4.6" y="7.6" width="1" height="1"/><rect x="4.6" y="10.2" width="1" height="1"/><rect x="17.4" y="2.4" width="1" height="1"/><rect x="17.4" y="5" width="1" height="1"/></g>
<g transform="translate(-1.4 0) rotate(17 16 14)"><rect x="9.6" y="4.6" width="13.4" height="18" fill="#17120f"/><rect x="11.4" y="5" width="9.4" height="17.4" fill="url(#pu)"/>
<g fill="#6b5a4a"><rect x="21.4" y="6" width="1" height="1"/><rect x="21.4" y="8.8" width="1" height="1"/><rect x="21.4" y="11.6" width="1" height="1"/><rect x="21.4" y="14.4" width="1" height="1"/><rect x="21.4" y="17.2" width="1" height="1"/><rect x="21.4" y="20" width="1" height="1"/></g></g>
<g transform="rotate(28 7.4 16.4)"><ellipse cx="7.8" cy="17.6" rx="5.9" ry="7.6" fill="#3b3b3b"/><ellipse cx="7.4" cy="16.2" rx="6" ry="7.8" fill="#f5f5f5"/>
<ellipse cx="7.6" cy="11.6" rx="1.5" ry="1.9" fill="#2a2a2a"/><ellipse cx="4.2" cy="15.4" rx="1.2" ry="1.6" fill="#2a2a2a"/><ellipse cx="10.6" cy="15.6" rx="1.3" ry="1.8" fill="#2a2a2a"/><ellipse cx="7" cy="20.4" rx="1.5" ry="1.9" fill="#2a2a2a"/><circle cx="7.4" cy="16" r=".7" fill="#bdbdbd"/></g>
<path d="M13.4 14.2L15 13 18.6 20.6 17 21.8Z" fill="#ececec" stroke="#555" stroke-width=".5"/>
</svg>
<svg style="left:20px;top:94px;" width="18" height="21"><use href="#film"/></svg>
<svg style="left:51px;top:96px" width="22" height="17" viewBox="0 0 22 17">
<path d="M.5 1.3Q.5.5 1.3.5H7.2Q8 .5 8 1.3V1.9H18.2Q19 1.9 19 2.7V16.5H.5Z" fill="url(#fo1)" stroke="#d8962e" stroke-width=".9"/>
<path d="M1.2 3.1H7.6" stroke="#fdf0b8" stroke-width=".8"/>
<path d="M.7 16.5L3.6 7.4H9.4L10.6 5.3H21.5L18.6 16.5Z" fill="url(#fo2)" stroke="#dc9c30" stroke-width=".9" stroke-linejoin="round"/>
<path d="M11.2 6.2H20.4" stroke="#fff6cf" stroke-width=".8"/>
</svg>
<svg style="left:132px;top:93px" width="16" height="23" viewBox="0 0 16 23">
<path d="M1.2 5.5H14.8V20.4Q14.8 22.5 8 22.5 1.2 22.5 1.2 20.4Z" fill="url(#tr)" stroke="#8c8c8c" stroke-width=".7"/>
<g fill="#7a7a7a" opacity=".55"><rect x="3" y="9" width="1" height="1.4"/><rect x="5.6" y="9" width="1" height="1.4"/><rect x="8.2" y="9" width="1" height="1.4"/><rect x="10.8" y="9" width="1" height="1.4"/><rect x="13" y="9" width=".8" height="1.4"/>
<rect x="3" y="12.2" width="1" height="1.4"/><rect x="5.6" y="12.2" width="1" height="1.4"/><rect x="8.2" y="12.2" width="1" height="1.4"/><rect x="10.8" y="12.2" width="1" height="1.4"/><rect x="13" y="12.2" width=".8" height="1.4"/>
<rect x="3" y="15.4" width="1" height="1.4"/><rect x="5.6" y="15.4" width="1" height="1.4"/><rect x="8.2" y="15.4" width="1" height="1.4"/><rect x="10.8" y="15.4" width="1" height="1.4"/><rect x="13" y="15.4" width=".8" height="1.4"/>
<rect x="3" y="18.6" width="1" height="1.4"/><rect x="5.6" y="18.6" width="1" height="1.4"/><rect x="8.2" y="18.6" width="1" height="1.4"/><rect x="10.8" y="18.6" width="1" height="1.4"/><rect x="13" y="18.6" width=".8" height="1.4"/></g>
<ellipse cx="8" cy="4" rx="7.6" ry="3.6" fill="#dedede" stroke="#909090" stroke-width=".7"/>
<ellipse cx="8" cy="3.2" rx="4.2" ry="1.5" fill="#c2c2c2" stroke="#9a9a9a" stroke-width=".5"/>
<path d="M.6 5Q8 9.6 15.4 5" fill="none" stroke="#9a9a9a" stroke-width=".7"/>
</svg>
<svg style="left:162.5px;top:94px" width="21" height="21" viewBox="0 0 21 21">
<path d="M1.3.5H19.7Q20.5.5 20.5 1.3V19.7Q20.5 20.5 19.7 20.5H1.3Q.5 20.5.5 19.7V1.3Q.5.5 1.3.5Z" fill="url(#fl)" stroke="#2c86c8"/>
<rect x="1.6" y="1.6" width="1.2" height="2.2" fill="#1c5f99"/><rect x="18.2" y="1.6" width="1.2" height="2.2" fill="#1c5f99"/>
<rect x="3.7" y="1.1" width="13.4" height="9.7" rx=".6" fill="#f4f7fa"/>
<g fill="#9aa3ad"><rect x="5.4" y="3" width="1.8" height="1.4" opacity=".6"/><rect x="7.8" y="3" width="1" height="1.4" opacity=".6"/><rect x="9.4" y="3" width="1.8" height="1.4" opacity=".6"/><rect x="11.8" y="3" width="1" height="1.4" opacity=".6"/><rect x="14" y="3" width="1.4" height="1.4" opacity=".6"/></g>
<rect x="5.4" y="5.9" width="10" height=".9" fill="#8b9198"/><rect x="12.6" y="5.7" width="1.6" height="1.2" fill="#5d6369"/>
<rect x="5.4" y="8" width="1.8" height="1.1" fill="#4e5358"/><rect x="8.2" y="8" width="7.2" height="1.1" fill="#4e5358"/>
<path d="M4.6 20.5V14.2Q4.6 13.3 5.5 13.3H15.6Q16.5 13.3 16.5 14.2V20.5Z" fill="#fff"/>
<rect x="8.6" y="14.6" width="7" height="5.9" fill="#dbe3ee"/>
<rect x="6.4" y="14.8" width="2.6" height="5.7" fill="#5a6068"/><rect x="7.2" y="15.8" width="1" height="4.4" fill="#8b929b"/>
</svg>
<svg style="left:427px;top:94px;" width="22" height="21"><use href="#lst"/></svg>
<svg style="left:1124px;top:94px" width="22" height="21" viewBox="0 0 22 21">
<rect x=".5" y=".5" width="21" height="20" rx=".8" fill="url(#wb)" stroke="#469bd0"/>
<rect x=".5" y=".5" width="21" height="3.6" fill="#3a9ad9"/><rect x="1" y="4.1" width="20" height="1" fill="#a9d4ef"/>
<rect x=".3" y="19.6" width="21.4" height="1.2" rx=".5" fill="#356f90"/>
<rect x="9.1" y="3" width="1.1" height="17" fill="#55a3d4"/>
<g fill="#7c7c7c"><rect x="7" y="5" width="1" height="1.5"/><rect x="7" y="8" width="1" height="1.5"/><rect x="7" y="11.1" width="1" height="1.5"/><rect x="7" y="14.2" width="1" height="1.5"/><rect x="7" y="17.3" width="1" height="1.5"/></g>
<path d="M9.3 9.2H11.6V6.2L16.3 11 11.6 15.9V13H9.3Z" fill="url(#ga)" stroke="#3f8a0c" stroke-width=".7" stroke-linejoin="round"/>
</svg>
<svg style="left:17px;top:996px;" width="18" height="21"><use href="#film"/></svg>
<svg style="left:23px;top:999px;" width="18" height="21"><use href="#film"/></svg>
<svg style="left:51px;top:999px;opacity:.78" width="22" height="17" viewBox="0 0 22 17">
<rect x=".4" y=".6" width="9.6" height="9" fill="#b3dbfb" stroke="#cfcfcf" stroke-width=".8"/><rect x="12" y=".6" width="9.6" height="9" fill="#b3dbfb" stroke="#cfcfcf" stroke-width=".8"/>
<rect x=".4" y=".6" width="9.6" height="1.4" fill="#d6d6d6"/><rect x="12" y=".6" width="9.6" height="1.4" fill="#d6d6d6"/>
<path d="M5.2 1.8V9.4M16.8 1.8V9.4" stroke="#e9eef2" stroke-width="1"/>
<path d="M1 9.8V12Q1 15.6 5 15.6H8Q9.6 15.6 10 13.6H12Q12.4 15.6 14 15.6H17Q21 15.6 21 12V9.8" fill="none" stroke="#bdbdbd" stroke-width="1.2"/>
<rect x="3.6" y="11.3" width="14.8" height="2" rx="1" fill="#f7f7f7" stroke="#bdbdbd" stroke-width=".7"/>
</svg>
<svg style="left:303px;top:997px;" width="22" height="21"><use href="#lst"/></svg>
<svg style="left:336px;top:1000px" width="22" height="14"><use href="#eye"/></svg>
<svg style="left:369px;top:996px" width="22" height="22" viewBox="-11 -11 22 22">
<path fill="url(#gg)" stroke="#999" stroke-width=".8" stroke-linejoin="round" d="M7.26 -2.25L10.41 -2.00L10.41 2.00L7.26 2.25L6.72 3.55L8.78 5.94L5.94 8.78L3.55 6.72L2.25 7.26L2.00 10.41L-2.00 10.41L-2.25 7.26L-3.55 6.72L-5.94 8.78L-8.78 5.94L-6.72 3.55L-7.26 2.25L-10.41 2.00L-10.41 -2.00L-7.26 -2.25L-6.72 -3.55L-8.78 -5.94L-5.94 -8.78L-3.55 -6.72L-2.25 -7.26L-2.00 -10.41L2.00 -10.41L2.25 -7.26L3.55 -6.72L5.94 -8.78L8.78 -5.94L6.72 -3.55Z"/>
<circle r="3.7" fill="#f0f0f0" stroke="#9a9a9a" stroke-width=".8"/>
</svg>
<svg style="left:427px;top:996px;opacity:.8" width="22" height="23" viewBox="0 0 22 23">
<path d="M.5.5H9L13.5 5V16.5H.5Z" fill="url(#pg)" stroke="#bdbdbd"/><path d="M9 .5V5H13.5" fill="#f6f6f6" stroke="#bdbdbd" stroke-width=".8"/>
<path d="M9 6.5H17.5L21.5 10.5V22.5H9Z" fill="url(#pg)" stroke="#bdbdbd"/><path d="M17.5 6.5V10.5H21.5" fill="#f6f6f6" stroke="#bdbdbd" stroke-width=".8"/>
</svg>
<svg style="left:1146px;top:147px" width="11.2" height="9.2" viewBox="0 0 11.2 9.2"><path d="M0 9.2L5.6 3.5 11.2 9.2V5.7L5.6 0 0 5.7Z" fill="#5d5d5d"/></svg>
<svg style="left:1146px;top:961px" width="11.2" height="9.2" viewBox="0 0 11.2 9.2"><path d="M0 0L5.6 5.7 11.2 0V3.5L5.6 9.2 0 3.5Z" fill="#5d5d5d"/></svg>
<svg style="left:1760px;top:86px" width="11.2" height="9.2" viewBox="0 0 11.2 9.2"><path d="M0 9.2L5.6 3.5 11.2 9.2V5.7L5.6 0 0 5.7Z" fill="#5d5d5d"/></svg>
<svg style="left:1760px;top:1022px" width="11.2" height="9.2" viewBox="0 0 11.2 9.2"><path d="M0 0L5.6 5.7 11.2 0V3.5L5.6 9.2 0 3.5Z" fill="#5d5d5d"/></svg>
<svg style="left:680px;top:625px" width="95" height="55" viewBox="0 0 95 55"><path d="M14.6 26.0C14.3 25.6 13.2 24.4 12.9 23.3C12.7 22.2 12.3 21.0 13.3 19.3C14.3 17.6 17.0 15.2 19.0 13.2C21.0 11.2 22.0 8.7 25.1 7.5C28.1 6.3 32.9 6.0 37.2 6.1C41.5 6.3 46.2 7.4 50.7 8.5C55.2 9.6 59.7 11.0 64.2 12.5C68.7 14.1 74.3 16.1 77.7 17.9C81.0 19.7 82.9 21.3 84.4 23.3C85.9 25.3 86.7 27.9 86.4 30.1C86.2 32.2 85.1 34.3 83.1 36.1C81.0 37.9 77.0 39.3 74.3 40.9C71.6 42.4 69.7 44.5 66.9 45.6C64.1 46.6 61.3 47.1 57.4 47.3C53.6 47.4 48.4 46.9 43.9 46.2C39.4 45.6 35.0 44.9 30.5 43.6C26.0 42.2 20.5 39.6 17.0 38.2C13.5 36.7 11.2 36.1 9.6 34.8C7.9 33.4 7.3 31.6 7.2 30.1C7.1 28.5 7.9 26.7 8.9 25.7C9.8 24.7 11.9 24.3 12.9 24.0C13.9 23.7 14.6 23.7 14.9 23.7" fill="none" stroke="#e3202a" stroke-width="1.25" stroke-linecap="round" stroke-linejoin="round"/></svg>
<span class="t" style="left:41.5px;top:15px;letter-spacing:-0.33px;color:#fff;">XviD4PSP 8.0.112 DAILY</span>
<span class="t" style="left:7.9px;top:52px;transform:scaleX(0.9289);">XviD4PSP</span>
<span class="t" style="left:99.3px;top:52px;transform:scaleX(0.9176);">Файл</span>
<span class="t" style="left:154.4px;top:52px;transform:scaleX(0.9432);">Задания</span>
<span class="t" style="left:234.8px;top:52px;letter-spacing:0.22px;">Лог</span>
<span class="t" style="left:279.7px;top:52px;letter-spacing:-0.12px;">Инструменты</span>
<span class="t" style="left:403.8px;top:52px;transform:scaleX(0.8836);">PRO</span>
<span class="t" style="left:452.9px;top:52px;letter-spacing:0.47px;">Помощь</span>
<span class="t" style="left:325px;top:97px;transform:scaleX(0.9621);color:#000;">Старт</span>
<span class="t" style="left:509.7px;top:97px;transform:scaleX(0.9630);color:#fff;">Инфо</span>
<span class="t" style="left:585.7px;top:97px;letter-spacing:-0.34px;">Метаданые</span>
<span class="t" style="left:708.7px;top:97px;transform:scaleX(0.9349);">Главы</span>
<span class="t" style="left:788.8px;top:97px;letter-spacing:-0.13px;">Нарезка</span>
<span class="t" style="left:887.9px;top:97px;letter-spacing:0.50px;">Потоки</span>
<span class="t" style="left:978.3px;top:97px;letter-spacing:-0.30px;">Состояние</span>
<span class="t" style="left:419.7px;top:143px;letter-spacing:0.09px;">Режим В-кадров:</span>
<span class="t" style="left:705.5px;top:143px;">1</span>
<span class="t" style="left:419.7px;top:174px;letter-spacing:0.20px;">Максимум В-кадров:</span>
<span class="t" style="left:705.5px;top:174px;letter-spacing:-0.05px;">2 кадра</span>
<span class="t" style="left:419.7px;top:205px;letter-spacing:-0.15px;">В-задержка:</span>
<span class="t" style="left:705.5px;top:205px;letter-spacing:0.04px;">1 кадр</span>
<span class="t" style="left:419.7px;top:236px;letter-spacing:-0.33px;">Референсные кадры:</span>
<span class="t" style="left:705.5px;top:236px;letter-spacing:0.04px;">1 кадр</span>
<span class="t" style="left:419.7px;top:267px;letter-spacing:0.03px;">Пакетов на кадр:</span>
<span class="t" style="left:705.5px;top:267px;letter-spacing:-0.21px;">1 пакет</span>
<span class="t" style="left:419.7px;top:298px;transform:scaleX(0.9584);">Язык:</span>
<span class="t" style="left:705.5px;top:298px;letter-spacing:-0.37px;">Английский (ENG)</span>
<span class="t" style="left:419.7px;top:329px;letter-spacing:-0.19px;">Расположение:</span>
<span class="t" style="left:705.5px;top:329px;letter-spacing:0.42px;">По умолчанию</span>
<span class="t" style="left:419.7px;top:360px;transform:scaleX(0.9253);">SOURCE_ID-eng:</span>
<span class="t" style="left:705.5px;top:360px;letter-spacing:0.10px;">001011</span>
<span class="t" style="left:419.7px;top:392px;letter-spacing:0.34px;">Аудио</span>
<span class="t" style="left:419.7px;top:425px;letter-spacing:-0.06px;">Кодек:</span>
<span class="t" style="left:705.5px;top:425px;letter-spacing:-0.09px;">ATSC A/52A (AC-3)</span>
<span class="t" style="left:419.7px;top:456px;transform:scaleX(0.9519);">Длительность:</span>
<span class="t" style="left:705.5px;top:456px;letter-spacing:-0.01px;">59s 422ms</span>
<span class="t" style="left:419.7px;top:487px;letter-spacing:-0.36px;">Размер:</span>
<span class="t" style="left:705.5px;top:487px;letter-spacing:0.22px;">2.87mb</span>
<span class="t" style="left:419.7px;top:518px;transform:scaleX(0.9320);">Битрейт:</span>
<span class="t" style="left:705.5px;top:518px;letter-spacing:0.24px;">386kbps</span>
<span class="t" style="left:419.7px;top:550px;letter-spacing:-0.08px;">Минимальный битрейт:</span>
<span class="t" style="left:705.5px;top:550px;letter-spacing:0.24px;">373kbps</span>
<span class="t" style="left:419.7px;top:580px;letter-spacing:-0.13px;">Максимальный битрейт:</span>
<span class="t" style="left:705.5px;top:580px;letter-spacing:0.24px;">386kbps</span>
<span class="t" style="left:419.7px;top:612px;letter-spacing:0.13px;">Первый кадр:</span>
<span class="t" style="left:705.5px;top:612px;transform:scaleX(0.9455);">0.03s</span>
<span class="t" style="left:419.7px;top:643px;letter-spacing:-0.24px;">Задержка:</span>
<span class="t" style="left:705.5px;top:643px;letter-spacing:-0.01px;">30ms</span>
<span class="t" style="left:419.7px;top:673px;">Интервал между кадрами:</span>
<span class="t" style="left:705.5px;top:673px;letter-spacing:-0.24px;">32000 (0.032s)</span>
<span class="t" style="left:419.7px;top:704px;letter-spacing:-0.28px;">Размер фрейма:</span>
<span class="t" style="left:705.5px;top:704px;letter-spacing:-0.05px;">1536 семплов</span>
<span class="t" style="left:419.7px;top:735px;transform:scaleX(0.9414);">Каналы:</span>
<span class="t" style="left:705.5px;top:735px;transform:scaleX(0.8582);">5.1</span>
<span class="t" style="left:419.7px;top:766px;transform:scaleX(0.9382);">Раскладка:</span>
<span class="t" style="left:705.5px;top:766px;transform:scaleX(0.8702);">L R C LFE Ls Rs</span>
<span class="t" style="left:419.7px;top:797px;letter-spacing:-0.08px;">Дискретизация:</span>
<span class="t" style="left:705.5px;top:797px;letter-spacing:-0.14px;">48000hz</span>
<span class="t" style="left:419.7px;top:828px;letter-spacing:-0.24px;">Битовая глубина:</span>
<span class="t" style="left:705.5px;top:828px;letter-spacing:-0.38px;">32 бит</span>
<span class="t" style="left:419.7px;top:859px;letter-spacing:0.06px;">Максимальная громкость:</span>
<span class="t" style="left:705.5px;top:859px;letter-spacing:-0.19px;">100.0% 0.00dB 1.00</span>
<span class="t" style="left:419.7px;top:890px;letter-spacing:0.05px;">Средняя громкость:</span>
<span class="t" style="left:705.5px;top:890px;letter-spacing:-0.11px;">18.8% -14.50dB 0.19</span>
<span class="t" style="left:419.7px;top:921px;letter-spacing:-0.43px;">Язык:</span>
<span class="t" style="left:705.5px;top:921px;transform:scaleX(0.9265);">Русский (RUS)</span>
<span class="t" style="left:419.7px;top:952px;letter-spacing:-0.19px;">Расположение:</span>
<span class="t" style="left:705.5px;top:952px;letter-spacing:0.41px;">По умолчанию</span>
<span class="t" style="left:1179.6px;top:86px;letter-spacing:-0.04px;">HEVC 91mbps 3840x2160p 16:9 yuv420p10le L15.3 B2 R1 23.976</span>
<span class="t" style="left:1179.6px;top:124px;letter-spacing:-0.11px;">Чересстрочность:</span>
<span class="t" style="left:1179.6px;top:155px;letter-spacing:-0.10px;">Частота кадров:</span>
<span class="t" style="left:1634.4px;top:155px;letter-spacing:0.11px;">23.976fps</span>
<span class="t" style="left:1179.6px;top:186px;letter-spacing:-0.18px;">В-кадры:</span>
<span class="t" style="left:1179.6px;top:217px;letter-spacing:0.02px;">Ключевые кадры:</span>
<span class="t" style="left:1705.8px;top:217px;transform:scaleX(0.8064);">?</span>
<span class="t" style="left:1179.6px;top:248px;letter-spacing:-0.07px;">Чёрные поля:</span>
<span class="t" style="left:1705.8px;top:248px;transform:scaleX(0.8064);">?</span>
<span class="t" style="left:1179.6px;top:279px;transform:scaleX(0.9390);">Битрейт:</span>
<span class="t" style="left:1624.3px;top:279px;letter-spacing:0.28px;">91357kbps</span>
<span class="t" style="left:1179.6px;top:310px;transform:scaleX(0.8776);">PSNR:</span>
<span class="t" style="left:1705.8px;top:310px;transform:scaleX(0.8064);">?</span>
<span class="t" style="left:1179.6px;top:341px;transform:scaleX(0.9289);">SSIM:</span>
<span class="t" style="left:1705.8px;top:341px;transform:scaleX(0.8064);">?</span>
<span class="t" style="left:1179.6px;top:380px;letter-spacing:0.01px;">AC3 386kbps 6ch 32bit 48kHz Русский Dub, iTunes 100.0%</span>
<span class="t" style="left:1179.6px;top:419px;transform:scaleX(0.9390);">Битрейт:</span>
<span class="t" style="left:1645.2px;top:419px;letter-spacing:0.14px;">386kbps</span>
<span class="t" style="left:1179.6px;top:450px;letter-spacing:0.17px;">Громкость:</span>
<span class="t" style="left:1596px;top:450px;letter-spacing:-0.31px;">100.0% 0.00dB</span>
<span class="t" style="left:1179.6px;top:491px;transform:scaleX(0.8472);">L</span>
<span class="t" style="left:1179.6px;top:539px;transform:scaleX(0.9278);">R</span>
<span class="t" style="left:1179.6px;top:587px;">C</span>
<span class="t" style="left:1179.6px;top:635px;transform:scaleX(0.7621);">LFE</span>
<span class="t" style="left:1179.6px;top:683px;transform:scaleX(0.8766);">Ls</span>
<span class="t" style="left:1179.6px;top:730px;transform:scaleX(0.8924);">Rs</span>
<span class="t" style="left:1179.6px;top:776px;">DTS 1527kbps 6ch 24bit 48kHz Русский А. Дольский 71.5%</span>
<span class="t" style="left:1179.6px;top:815px;transform:scaleX(0.9390);">Битрейт:</span>
<span class="t" style="left:1636.1px;top:815px;letter-spacing:0.03px;">1527kbps</span>
<span class="t" style="left:1179.6px;top:846px;letter-spacing:0.17px;">Громкость:</span>
<span class="t" style="left:1598px;top:846px;letter-spacing:-0.15px;">71.5% -2.91dB</span>
<span class="t" style="left:1179.6px;top:887px;transform:scaleX(0.8472);">L</span>
<span class="t" style="left:1179.6px;top:935px;transform:scaleX(0.9278);">R</span>
<span class="t" style="left:1179.6px;top:983px;">C</span>
<span class="t" style="left:1179.6px;top:1031px;transform:scaleX(0.7621);">LFE</span>
<span class="t" style="left:125px;top:147px;letter-spacing:-0.20px;color:#fff;">Пила 8.2017.UHD...x.2160p.sampl3</span>
<span class="t" style="left:125px;top:177px;letter-spacing:0.15px;color:#fff;">770.37mb &gt; ?</span>
<span class="t" style="left:125px;top:228px;transform:scaleX(0.8577);color:#fff;">ERROR:</span>
<span class="t" style="left:352.3px;top:228px;letter-spacing:-0.37px;color:#fff;">0.00%</span>
<div style="left:1px;top:1039px;width:1778px;height:1px;background:#fbf8f5;"></div>
<div style="left:0px;top:1040px;width:1780px;height:1px;background:#0078d7;"></div>
</div>
</body></html>
